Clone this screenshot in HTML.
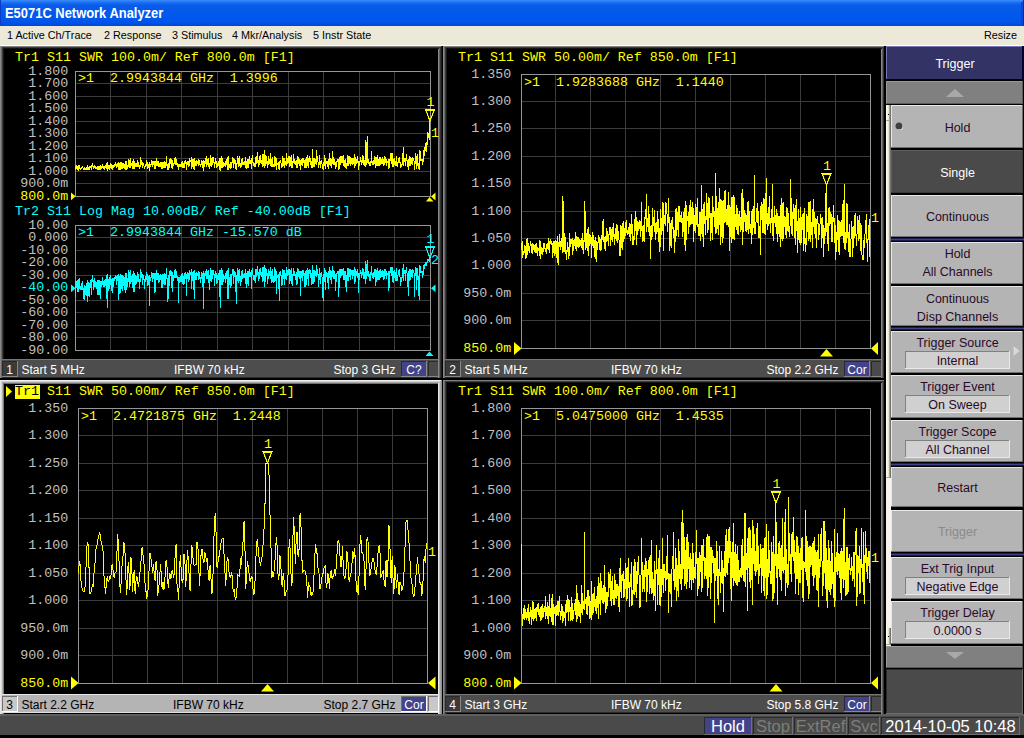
<!DOCTYPE html>
<html><head><meta charset="utf-8"><style>
html,body{margin:0;padding:0;background:#000;width:1024px;height:738px;overflow:hidden;}
svg{display:block;}
text{shape-rendering:auto;white-space:pre;}
polygon{shape-rendering:auto;}
</style></head><body>
<svg width="1024" height="738" viewBox="0 0 1024 738" shape-rendering="crispEdges"><defs>
<linearGradient id="tb" x1="0" y1="0" x2="0" y2="1">
<stop offset="0" stop-color="#3b8cf7"/>
<stop offset="0.1" stop-color="#1a6ef5"/>
<stop offset="0.2" stop-color="#0a5ce8"/>
<stop offset="0.55" stop-color="#0058ee"/>
<stop offset="0.85" stop-color="#0055ea"/>
<stop offset="1" stop-color="#0046d6"/>
</linearGradient>
</defs>
<rect x="0" y="0" width="1024" height="26" fill="url(#tb)" />
<rect x="0" y="0" width="1" height="26" fill="#0a3cc8" />
<rect x="1021" y="2" width="3" height="24" fill="#0844d8" />
<rect x="1023" y="0" width="1" height="26" fill="#0030b0" />
<text transform="translate(5,18) scale(0.924 1)" x="0" y="0" fill="#ffffff" font-family="Liberation Sans" font-size="14" font-weight="bold">E5071C Network Analyzer</text>
<rect x="0" y="26" width="1024" height="19" fill="#ece9d8" />
<rect x="0" y="45" width="1024" height="1" fill="#ffffff" />
<text x="7" y="39" fill="#000000" font-family="'Liberation Sans', sans-serif" font-size="10.8" text-anchor="start" font-weight="normal" >1 Active Ch/Trace</text>
<text x="104" y="39" fill="#000000" font-family="'Liberation Sans', sans-serif" font-size="10.8" text-anchor="start" font-weight="normal" >2 Response</text>
<text x="172" y="39" fill="#000000" font-family="'Liberation Sans', sans-serif" font-size="10.8" text-anchor="start" font-weight="normal" >3 Stimulus</text>
<text x="232" y="39" fill="#000000" font-family="'Liberation Sans', sans-serif" font-size="10.8" text-anchor="start" font-weight="normal" >4 Mkr/Analysis</text>
<text x="313" y="39" fill="#000000" font-family="'Liberation Sans', sans-serif" font-size="10.8" text-anchor="start" font-weight="normal" >5 Instr State</text>
<text x="1017" y="39" fill="#000000" font-family="'Liberation Sans', sans-serif" font-size="10.8" text-anchor="end" font-weight="normal" >Resize</text>
<rect x="0" y="46" width="886" height="669" fill="#000000" />
<rect x="0" y="46" width="442" height="332" fill="#000000" />
<rect x="0" y="46" width="442" height="1" fill="#808080" />
<rect x="0" y="47" width="442" height="1" fill="#3c3c3c" />
<rect x="0" y="48" width="442" height="1" fill="#141414" />
<rect x="0" y="46" width="1" height="332" fill="#888888" />
<rect x="1" y="47" width="1" height="331" fill="#6a6a6a" />
<rect x="2" y="48" width="1" height="330" fill="#3a3a3a" />
<rect x="3" y="49" width="1" height="329" fill="#1a1a1a" />
<rect x="441" y="46" width="1" height="332" fill="#1a1a1a" />
<rect x="440" y="47" width="1" height="331" fill="#333333" />
<rect x="439" y="48" width="1" height="330" fill="#606060" />
<rect x="438" y="49" width="1" height="329" fill="#888888" />
<rect x="443" y="46" width="442" height="332" fill="#000000" />
<rect x="443" y="46" width="442" height="1" fill="#808080" />
<rect x="443" y="47" width="442" height="1" fill="#3c3c3c" />
<rect x="443" y="48" width="442" height="1" fill="#141414" />
<rect x="443" y="46" width="1" height="332" fill="#888888" />
<rect x="444" y="47" width="1" height="331" fill="#6a6a6a" />
<rect x="445" y="48" width="1" height="330" fill="#3a3a3a" />
<rect x="446" y="49" width="1" height="329" fill="#1a1a1a" />
<rect x="884" y="46" width="1" height="332" fill="#1a1a1a" />
<rect x="883" y="47" width="1" height="331" fill="#333333" />
<rect x="882" y="48" width="1" height="330" fill="#606060" />
<rect x="881" y="49" width="1" height="329" fill="#888888" />
<rect x="0" y="380" width="442" height="334" fill="#000000" />
<rect x="0" y="380" width="1" height="334" fill="#e8e8e8" />
<rect x="1" y="381" width="1" height="333" fill="#d8d8d8" />
<rect x="2" y="382" width="1" height="332" fill="#b0b0b0" />
<rect x="3" y="383" width="1" height="331" fill="#787878" />
<rect x="0" y="380" width="442" height="1" fill="#f0f0f0" />
<rect x="1" y="381" width="440" height="1" fill="#d0d0d0" />
<rect x="2" y="382" width="438" height="1" fill="#a8a8a8" />
<rect x="3" y="383" width="436" height="1" fill="#707070" />
<rect x="441" y="380" width="1" height="334" fill="#909090" />
<rect x="440" y="381" width="1" height="333" fill="#a4a4a4" />
<rect x="439" y="382" width="1" height="332" fill="#c4c4c4" />
<rect x="438" y="383" width="1" height="331" fill="#e8e8e8" />
<rect x="443" y="380" width="442" height="334" fill="#000000" />
<rect x="443" y="380" width="442" height="1" fill="#808080" />
<rect x="443" y="381" width="442" height="1" fill="#3c3c3c" />
<rect x="443" y="382" width="442" height="1" fill="#141414" />
<rect x="443" y="380" width="1" height="334" fill="#888888" />
<rect x="444" y="381" width="1" height="333" fill="#6a6a6a" />
<rect x="445" y="382" width="1" height="332" fill="#3a3a3a" />
<rect x="446" y="383" width="1" height="331" fill="#1a1a1a" />
<rect x="884" y="380" width="1" height="334" fill="#1a1a1a" />
<rect x="883" y="381" width="1" height="333" fill="#333333" />
<rect x="882" y="382" width="1" height="332" fill="#606060" />
<rect x="881" y="383" width="1" height="331" fill="#888888" />
<rect x="110" y="71" width="1" height="125" fill="#3c3c3c" />
<rect x="146" y="71" width="1" height="125" fill="#3c3c3c" />
<rect x="181" y="71" width="1" height="125" fill="#3c3c3c" />
<rect x="217" y="71" width="1" height="125" fill="#3c3c3c" />
<rect x="252" y="71" width="1" height="125" fill="#3c3c3c" />
<rect x="288" y="71" width="1" height="125" fill="#3c3c3c" />
<rect x="323" y="71" width="1" height="125" fill="#3c3c3c" />
<rect x="359" y="71" width="1" height="125" fill="#3c3c3c" />
<rect x="394" y="71" width="1" height="125" fill="#3c3c3c" />
<rect x="75" y="83" width="355" height="1" fill="#3c3c3c" />
<rect x="75" y="96" width="355" height="1" fill="#3c3c3c" />
<rect x="75" y="108" width="355" height="1" fill="#3c3c3c" />
<rect x="75" y="121" width="355" height="1" fill="#3c3c3c" />
<rect x="75" y="133" width="355" height="1" fill="#3c3c3c" />
<rect x="75" y="146" width="355" height="1" fill="#3c3c3c" />
<rect x="75" y="158" width="355" height="1" fill="#3c3c3c" />
<rect x="75" y="171" width="355" height="1" fill="#3c3c3c" />
<rect x="75" y="183" width="355" height="1" fill="#3c3c3c" />
<rect x="75" y="71" width="356" height="1" fill="#969696" />
<rect x="75" y="196" width="356" height="1" fill="#969696" />
<rect x="75" y="71" width="1" height="126" fill="#969696" />
<rect x="430" y="71" width="1" height="126" fill="#969696" />
<text transform="translate(15,61) scale(1.111 1)" x="0" y="0" fill="#ffff00" font-family="Liberation Mono" font-size="12" text-anchor="start" >Tr1 S11 SWR 100.0m/ Ref 800.0m [F1]</text>
<text transform="translate(68.2,74.6) scale(1.111 1)" x="0" y="0" fill="#c0c0c0" font-family="Liberation Mono" font-size="12" text-anchor="end" >1.800</text>
<text transform="translate(68.2,87.1) scale(1.111 1)" x="0" y="0" fill="#c0c0c0" font-family="Liberation Mono" font-size="12" text-anchor="end" >1.700</text>
<text transform="translate(68.2,99.6) scale(1.111 1)" x="0" y="0" fill="#c0c0c0" font-family="Liberation Mono" font-size="12" text-anchor="end" >1.600</text>
<text transform="translate(68.2,112.1) scale(1.111 1)" x="0" y="0" fill="#c0c0c0" font-family="Liberation Mono" font-size="12" text-anchor="end" >1.500</text>
<text transform="translate(68.2,124.6) scale(1.111 1)" x="0" y="0" fill="#c0c0c0" font-family="Liberation Mono" font-size="12" text-anchor="end" >1.400</text>
<text transform="translate(68.2,137.1) scale(1.111 1)" x="0" y="0" fill="#c0c0c0" font-family="Liberation Mono" font-size="12" text-anchor="end" >1.300</text>
<text transform="translate(68.2,149.6) scale(1.111 1)" x="0" y="0" fill="#c0c0c0" font-family="Liberation Mono" font-size="12" text-anchor="end" >1.200</text>
<text transform="translate(68.2,162.1) scale(1.111 1)" x="0" y="0" fill="#c0c0c0" font-family="Liberation Mono" font-size="12" text-anchor="end" >1.100</text>
<text transform="translate(68.2,174.6) scale(1.111 1)" x="0" y="0" fill="#c0c0c0" font-family="Liberation Mono" font-size="12" text-anchor="end" >1.000</text>
<text transform="translate(68.2,187.1) scale(1.111 1)" x="0" y="0" fill="#c0c0c0" font-family="Liberation Mono" font-size="12" text-anchor="end" >900.0m</text>
<text transform="translate(68.2,199.6) scale(1.111 1)" x="0" y="0" fill="#ffff00" font-family="Liberation Mono" font-size="12" text-anchor="end" >800.0m</text>
<text transform="translate(78,82) scale(1.111 1)" x="0" y="0" fill="#ffff00" font-family="Liberation Mono" font-size="12" text-anchor="start" >&gt;1  2.9943844 GHz  1.3996</text>
<rect x="110" y="225" width="1" height="125" fill="#3c3c3c" />
<rect x="146" y="225" width="1" height="125" fill="#3c3c3c" />
<rect x="181" y="225" width="1" height="125" fill="#3c3c3c" />
<rect x="217" y="225" width="1" height="125" fill="#3c3c3c" />
<rect x="252" y="225" width="1" height="125" fill="#3c3c3c" />
<rect x="288" y="225" width="1" height="125" fill="#3c3c3c" />
<rect x="323" y="225" width="1" height="125" fill="#3c3c3c" />
<rect x="359" y="225" width="1" height="125" fill="#3c3c3c" />
<rect x="394" y="225" width="1" height="125" fill="#3c3c3c" />
<rect x="75" y="237" width="355" height="1" fill="#3c3c3c" />
<rect x="75" y="250" width="355" height="1" fill="#3c3c3c" />
<rect x="75" y="262" width="355" height="1" fill="#3c3c3c" />
<rect x="75" y="275" width="355" height="1" fill="#3c3c3c" />
<rect x="75" y="287" width="355" height="1" fill="#3c3c3c" />
<rect x="75" y="300" width="355" height="1" fill="#3c3c3c" />
<rect x="75" y="312" width="355" height="1" fill="#3c3c3c" />
<rect x="75" y="325" width="355" height="1" fill="#3c3c3c" />
<rect x="75" y="337" width="355" height="1" fill="#3c3c3c" />
<rect x="75" y="225" width="356" height="1" fill="#969696" />
<rect x="75" y="350" width="356" height="1" fill="#969696" />
<rect x="75" y="225" width="1" height="126" fill="#969696" />
<rect x="430" y="225" width="1" height="126" fill="#969696" />
<text transform="translate(15,215) scale(1.111 1)" x="0" y="0" fill="#00ffff" font-family="Liberation Mono" font-size="12" text-anchor="start" >Tr2 S11 Log Mag 10.00dB/ Ref -40.00dB [F1]</text>
<text transform="translate(68.2,228.6) scale(1.111 1)" x="0" y="0" fill="#c0c0c0" font-family="Liberation Mono" font-size="12" text-anchor="end" >10.00</text>
<text transform="translate(68.2,241.1) scale(1.111 1)" x="0" y="0" fill="#c0c0c0" font-family="Liberation Mono" font-size="12" text-anchor="end" >0.000</text>
<text transform="translate(68.2,253.6) scale(1.111 1)" x="0" y="0" fill="#c0c0c0" font-family="Liberation Mono" font-size="12" text-anchor="end" >-10.00</text>
<text transform="translate(68.2,266.1) scale(1.111 1)" x="0" y="0" fill="#c0c0c0" font-family="Liberation Mono" font-size="12" text-anchor="end" >-20.00</text>
<text transform="translate(68.2,278.6) scale(1.111 1)" x="0" y="0" fill="#c0c0c0" font-family="Liberation Mono" font-size="12" text-anchor="end" >-30.00</text>
<text transform="translate(68.2,291.1) scale(1.111 1)" x="0" y="0" fill="#00ffff" font-family="Liberation Mono" font-size="12" text-anchor="end" >-40.00</text>
<text transform="translate(68.2,303.6) scale(1.111 1)" x="0" y="0" fill="#c0c0c0" font-family="Liberation Mono" font-size="12" text-anchor="end" >-50.00</text>
<text transform="translate(68.2,316.1) scale(1.111 1)" x="0" y="0" fill="#c0c0c0" font-family="Liberation Mono" font-size="12" text-anchor="end" >-60.00</text>
<text transform="translate(68.2,328.6) scale(1.111 1)" x="0" y="0" fill="#c0c0c0" font-family="Liberation Mono" font-size="12" text-anchor="end" >-70.00</text>
<text transform="translate(68.2,341.1) scale(1.111 1)" x="0" y="0" fill="#c0c0c0" font-family="Liberation Mono" font-size="12" text-anchor="end" >-80.00</text>
<text transform="translate(68.2,353.6) scale(1.111 1)" x="0" y="0" fill="#c0c0c0" font-family="Liberation Mono" font-size="12" text-anchor="end" >-90.00</text>
<text transform="translate(78,236) scale(1.111 1)" x="0" y="0" fill="#00ffff" font-family="Liberation Mono" font-size="12" text-anchor="start" >&gt;1  2.9943844 GHz -15.570 dB</text>
<rect x="2" y="359" width="436" height="1" fill="#787878" />
<rect x="2" y="360" width="436" height="18" fill="#4d4d4d" />
<rect x="2" y="377" width="436" height="1" fill="#2a2a2a" />
<rect x="2" y="361" width="16" height="16" fill="#888888" />
<rect x="2" y="361" width="15" height="15" fill="#2a2a2a" />
<rect x="3" y="362" width="14" height="14" fill="#3a3a3a" />
<text x="9.5" y="374" fill="#ffffff" font-family="'Liberation Sans', sans-serif" font-size="12" text-anchor="middle" font-weight="normal" >1</text>
<text x="21.5" y="374" fill="#ffffff" font-family="'Liberation Sans', sans-serif" font-size="12" text-anchor="start" font-weight="normal" >Start 5 MHz</text>
<text x="174" y="374" fill="#ffffff" font-family="'Liberation Sans', sans-serif" font-size="12" text-anchor="start" font-weight="normal" >IFBW 70 kHz</text>
<text x="395.5" y="374" fill="#ffffff" font-family="'Liberation Sans', sans-serif" font-size="12" text-anchor="end" font-weight="normal" >Stop 3 GHz</text>
<rect x="401" y="361" width="26" height="16" fill="#888888" />
<rect x="401" y="361" width="25" height="15" fill="#2a2a2a" />
<rect x="402" y="362" width="24" height="14" fill="#43438a" />
<text x="414" y="374" fill="#ffffff" font-family="'Liberation Sans', sans-serif" font-size="12" text-anchor="middle" font-weight="normal" >C?</text>
<rect x="428" y="361" width="11" height="16" fill="#888888" />
<rect x="428" y="361" width="10" height="15" fill="#2a2a2a" />
<rect x="429" y="362" width="9" height="14" fill="#4a4a4a" />
<rect x="555" y="74" width="1" height="274" fill="#3c3c3c" />
<rect x="590" y="74" width="1" height="274" fill="#3c3c3c" />
<rect x="625" y="74" width="1" height="274" fill="#3c3c3c" />
<rect x="660" y="74" width="1" height="274" fill="#3c3c3c" />
<rect x="695" y="74" width="1" height="274" fill="#3c3c3c" />
<rect x="730" y="74" width="1" height="274" fill="#3c3c3c" />
<rect x="765" y="74" width="1" height="274" fill="#3c3c3c" />
<rect x="800" y="74" width="1" height="274" fill="#3c3c3c" />
<rect x="835" y="74" width="1" height="274" fill="#3c3c3c" />
<rect x="521" y="101" width="349" height="1" fill="#3c3c3c" />
<rect x="521" y="128" width="349" height="1" fill="#3c3c3c" />
<rect x="521" y="156" width="349" height="1" fill="#3c3c3c" />
<rect x="521" y="183" width="349" height="1" fill="#3c3c3c" />
<rect x="521" y="211" width="349" height="1" fill="#3c3c3c" />
<rect x="521" y="238" width="349" height="1" fill="#3c3c3c" />
<rect x="521" y="265" width="349" height="1" fill="#3c3c3c" />
<rect x="521" y="293" width="349" height="1" fill="#3c3c3c" />
<rect x="521" y="320" width="349" height="1" fill="#3c3c3c" />
<rect x="521" y="74" width="350" height="1" fill="#969696" />
<rect x="521" y="348" width="350" height="1" fill="#969696" />
<rect x="521" y="74" width="1" height="275" fill="#969696" />
<rect x="870" y="74" width="1" height="275" fill="#969696" />
<text transform="translate(458,61) scale(1.111 1)" x="0" y="0" fill="#ffff00" font-family="Liberation Mono" font-size="12" text-anchor="start" >Tr1 S11 SWR 50.00m/ Ref 850.0m [F1]</text>
<text transform="translate(511.2,77.6) scale(1.111 1)" x="0" y="0" fill="#c0c0c0" font-family="Liberation Mono" font-size="12" text-anchor="end" >1.350</text>
<text transform="translate(511.2,105.0) scale(1.111 1)" x="0" y="0" fill="#c0c0c0" font-family="Liberation Mono" font-size="12" text-anchor="end" >1.300</text>
<text transform="translate(511.2,132.4) scale(1.111 1)" x="0" y="0" fill="#c0c0c0" font-family="Liberation Mono" font-size="12" text-anchor="end" >1.250</text>
<text transform="translate(511.2,159.79999999999998) scale(1.111 1)" x="0" y="0" fill="#c0c0c0" font-family="Liberation Mono" font-size="12" text-anchor="end" >1.200</text>
<text transform="translate(511.2,187.2) scale(1.111 1)" x="0" y="0" fill="#c0c0c0" font-family="Liberation Mono" font-size="12" text-anchor="end" >1.150</text>
<text transform="translate(511.2,214.6) scale(1.111 1)" x="0" y="0" fill="#c0c0c0" font-family="Liberation Mono" font-size="12" text-anchor="end" >1.100</text>
<text transform="translate(511.2,242.0) scale(1.111 1)" x="0" y="0" fill="#c0c0c0" font-family="Liberation Mono" font-size="12" text-anchor="end" >1.050</text>
<text transform="translate(511.2,269.40000000000003) scale(1.111 1)" x="0" y="0" fill="#c0c0c0" font-family="Liberation Mono" font-size="12" text-anchor="end" >1.000</text>
<text transform="translate(511.2,296.8) scale(1.111 1)" x="0" y="0" fill="#c0c0c0" font-family="Liberation Mono" font-size="12" text-anchor="end" >950.0m</text>
<text transform="translate(511.2,324.20000000000005) scale(1.111 1)" x="0" y="0" fill="#c0c0c0" font-family="Liberation Mono" font-size="12" text-anchor="end" >900.0m</text>
<text transform="translate(511.2,351.6) scale(1.111 1)" x="0" y="0" fill="#ffff00" font-family="Liberation Mono" font-size="12" text-anchor="end" >850.0m</text>
<text transform="translate(524,86) scale(1.111 1)" x="0" y="0" fill="#ffff00" font-family="Liberation Mono" font-size="12" text-anchor="start" >&gt;1  1.9283688 GHz  1.1440</text>
<rect x="445" y="359" width="436" height="1" fill="#787878" />
<rect x="445" y="360" width="436" height="18" fill="#4d4d4d" />
<rect x="445" y="377" width="436" height="1" fill="#2a2a2a" />
<rect x="445" y="361" width="16" height="16" fill="#888888" />
<rect x="445" y="361" width="15" height="15" fill="#2a2a2a" />
<rect x="446" y="362" width="14" height="14" fill="#3a3a3a" />
<text x="452.5" y="374" fill="#ffffff" font-family="'Liberation Sans', sans-serif" font-size="12" text-anchor="middle" font-weight="normal" >2</text>
<text x="464.5" y="374" fill="#ffffff" font-family="'Liberation Sans', sans-serif" font-size="12" text-anchor="start" font-weight="normal" >Start 5 MHz</text>
<text x="611" y="374" fill="#ffffff" font-family="'Liberation Sans', sans-serif" font-size="12" text-anchor="start" font-weight="normal" >IFBW 70 kHz</text>
<text x="838.5" y="374" fill="#ffffff" font-family="'Liberation Sans', sans-serif" font-size="12" text-anchor="end" font-weight="normal" >Stop 2.2 GHz</text>
<rect x="844" y="361" width="26" height="16" fill="#888888" />
<rect x="844" y="361" width="25" height="15" fill="#2a2a2a" />
<rect x="845" y="362" width="24" height="14" fill="#43438a" />
<text x="857" y="374" fill="#ffffff" font-family="'Liberation Sans', sans-serif" font-size="12" text-anchor="middle" font-weight="normal" >Cor</text>
<rect x="871" y="361" width="11" height="16" fill="#888888" />
<rect x="871" y="361" width="10" height="15" fill="#2a2a2a" />
<rect x="872" y="362" width="9" height="14" fill="#4a4a4a" />
<rect x="112" y="408" width="1" height="275" fill="#3c3c3c" />
<rect x="147" y="408" width="1" height="275" fill="#3c3c3c" />
<rect x="182" y="408" width="1" height="275" fill="#3c3c3c" />
<rect x="217" y="408" width="1" height="275" fill="#3c3c3c" />
<rect x="252" y="408" width="1" height="275" fill="#3c3c3c" />
<rect x="287" y="408" width="1" height="275" fill="#3c3c3c" />
<rect x="322" y="408" width="1" height="275" fill="#3c3c3c" />
<rect x="357" y="408" width="1" height="275" fill="#3c3c3c" />
<rect x="392" y="408" width="1" height="275" fill="#3c3c3c" />
<rect x="78" y="435" width="349" height="1" fill="#3c3c3c" />
<rect x="78" y="463" width="349" height="1" fill="#3c3c3c" />
<rect x="78" y="490" width="349" height="1" fill="#3c3c3c" />
<rect x="78" y="518" width="349" height="1" fill="#3c3c3c" />
<rect x="78" y="545" width="349" height="1" fill="#3c3c3c" />
<rect x="78" y="573" width="349" height="1" fill="#3c3c3c" />
<rect x="78" y="600" width="349" height="1" fill="#3c3c3c" />
<rect x="78" y="628" width="349" height="1" fill="#3c3c3c" />
<rect x="78" y="655" width="349" height="1" fill="#3c3c3c" />
<rect x="78" y="408" width="350" height="1" fill="#969696" />
<rect x="78" y="683" width="350" height="1" fill="#969696" />
<rect x="78" y="408" width="1" height="276" fill="#969696" />
<rect x="427" y="408" width="1" height="276" fill="#969696" />
<text transform="translate(68.2,411.6) scale(1.111 1)" x="0" y="0" fill="#c0c0c0" font-family="Liberation Mono" font-size="12" text-anchor="end" >1.350</text>
<text transform="translate(68.2,439.1) scale(1.111 1)" x="0" y="0" fill="#c0c0c0" font-family="Liberation Mono" font-size="12" text-anchor="end" >1.300</text>
<text transform="translate(68.2,466.6) scale(1.111 1)" x="0" y="0" fill="#c0c0c0" font-family="Liberation Mono" font-size="12" text-anchor="end" >1.250</text>
<text transform="translate(68.2,494.1) scale(1.111 1)" x="0" y="0" fill="#c0c0c0" font-family="Liberation Mono" font-size="12" text-anchor="end" >1.200</text>
<text transform="translate(68.2,521.6) scale(1.111 1)" x="0" y="0" fill="#c0c0c0" font-family="Liberation Mono" font-size="12" text-anchor="end" >1.150</text>
<text transform="translate(68.2,549.1) scale(1.111 1)" x="0" y="0" fill="#c0c0c0" font-family="Liberation Mono" font-size="12" text-anchor="end" >1.100</text>
<text transform="translate(68.2,576.6) scale(1.111 1)" x="0" y="0" fill="#c0c0c0" font-family="Liberation Mono" font-size="12" text-anchor="end" >1.050</text>
<text transform="translate(68.2,604.1) scale(1.111 1)" x="0" y="0" fill="#c0c0c0" font-family="Liberation Mono" font-size="12" text-anchor="end" >1.000</text>
<text transform="translate(68.2,631.6) scale(1.111 1)" x="0" y="0" fill="#c0c0c0" font-family="Liberation Mono" font-size="12" text-anchor="end" >950.0m</text>
<text transform="translate(68.2,659.1) scale(1.111 1)" x="0" y="0" fill="#c0c0c0" font-family="Liberation Mono" font-size="12" text-anchor="end" >900.0m</text>
<text transform="translate(68.2,686.6) scale(1.111 1)" x="0" y="0" fill="#ffff00" font-family="Liberation Mono" font-size="12" text-anchor="end" >850.0m</text>
<rect x="15" y="385" width="25" height="14" fill="#ffff00" />
<polygon points="6,386 12,391.5 6,397" fill="#ffff00" stroke="none"/>
<text transform="translate(15,395) scale(1.111 1)" x="0" y="0" fill="#000000" font-family="Liberation Mono" font-size="12" text-anchor="start" >Tr1</text>
<text transform="translate(15,395) scale(1.111 1)" x="0" y="0" fill="#ffff00" font-family="Liberation Mono" font-size="12" text-anchor="start" xml:space="preserve">    S11 SWR 50.00m/ Ref 850.0m [F1]</text>
<text transform="translate(81,420) scale(1.111 1)" x="0" y="0" fill="#ffff00" font-family="Liberation Mono" font-size="12" text-anchor="start" >&gt;1  2.4721875 GHz  1.2448</text>
<rect x="2" y="694" width="436" height="1" fill="#e6e6e6" />
<rect x="2" y="695" width="436" height="18" fill="#b4b4b4" />
<rect x="2" y="712" width="436" height="1" fill="#e0e0e0" />
<rect x="2" y="696" width="16" height="16" fill="#ffffff" />
<rect x="2" y="696" width="15" height="15" fill="#707070" />
<rect x="3" y="697" width="14" height="14" fill="#c8c8c8" />
<text x="9.5" y="709" fill="#000000" font-family="'Liberation Sans', sans-serif" font-size="12" text-anchor="middle" font-weight="normal" >3</text>
<text x="21.5" y="709" fill="#000000" font-family="'Liberation Sans', sans-serif" font-size="12" text-anchor="start" font-weight="normal" >Start 2.2 GHz</text>
<text x="173" y="709" fill="#000000" font-family="'Liberation Sans', sans-serif" font-size="12" text-anchor="start" font-weight="normal" >IFBW 70 kHz</text>
<text x="395.5" y="709" fill="#000000" font-family="'Liberation Sans', sans-serif" font-size="12" text-anchor="end" font-weight="normal" >Stop 2.7 GHz</text>
<rect x="401" y="696" width="26" height="16" fill="#ffffff" />
<rect x="401" y="696" width="25" height="15" fill="#707070" />
<rect x="402" y="697" width="24" height="14" fill="#43438a" />
<text x="414" y="709" fill="#ffffff" font-family="'Liberation Sans', sans-serif" font-size="12" text-anchor="middle" font-weight="normal" >Cor</text>
<rect x="428" y="696" width="11" height="16" fill="#ffffff" />
<rect x="428" y="696" width="10" height="15" fill="#707070" />
<rect x="429" y="697" width="9" height="14" fill="#c8c8c8" />
<rect x="555" y="408" width="1" height="275" fill="#3c3c3c" />
<rect x="590" y="408" width="1" height="275" fill="#3c3c3c" />
<rect x="625" y="408" width="1" height="275" fill="#3c3c3c" />
<rect x="660" y="408" width="1" height="275" fill="#3c3c3c" />
<rect x="695" y="408" width="1" height="275" fill="#3c3c3c" />
<rect x="730" y="408" width="1" height="275" fill="#3c3c3c" />
<rect x="765" y="408" width="1" height="275" fill="#3c3c3c" />
<rect x="800" y="408" width="1" height="275" fill="#3c3c3c" />
<rect x="835" y="408" width="1" height="275" fill="#3c3c3c" />
<rect x="521" y="435" width="349" height="1" fill="#3c3c3c" />
<rect x="521" y="463" width="349" height="1" fill="#3c3c3c" />
<rect x="521" y="490" width="349" height="1" fill="#3c3c3c" />
<rect x="521" y="518" width="349" height="1" fill="#3c3c3c" />
<rect x="521" y="545" width="349" height="1" fill="#3c3c3c" />
<rect x="521" y="573" width="349" height="1" fill="#3c3c3c" />
<rect x="521" y="600" width="349" height="1" fill="#3c3c3c" />
<rect x="521" y="628" width="349" height="1" fill="#3c3c3c" />
<rect x="521" y="655" width="349" height="1" fill="#3c3c3c" />
<rect x="521" y="408" width="350" height="1" fill="#969696" />
<rect x="521" y="683" width="350" height="1" fill="#969696" />
<rect x="521" y="408" width="1" height="276" fill="#969696" />
<rect x="870" y="408" width="1" height="276" fill="#969696" />
<text transform="translate(458,395) scale(1.111 1)" x="0" y="0" fill="#ffff00" font-family="Liberation Mono" font-size="12" text-anchor="start" >Tr1 S11 SWR 100.0m/ Ref 800.0m [F1]</text>
<text transform="translate(511.2,411.6) scale(1.111 1)" x="0" y="0" fill="#c0c0c0" font-family="Liberation Mono" font-size="12" text-anchor="end" >1.800</text>
<text transform="translate(511.2,439.1) scale(1.111 1)" x="0" y="0" fill="#c0c0c0" font-family="Liberation Mono" font-size="12" text-anchor="end" >1.700</text>
<text transform="translate(511.2,466.6) scale(1.111 1)" x="0" y="0" fill="#c0c0c0" font-family="Liberation Mono" font-size="12" text-anchor="end" >1.600</text>
<text transform="translate(511.2,494.1) scale(1.111 1)" x="0" y="0" fill="#c0c0c0" font-family="Liberation Mono" font-size="12" text-anchor="end" >1.500</text>
<text transform="translate(511.2,521.6) scale(1.111 1)" x="0" y="0" fill="#c0c0c0" font-family="Liberation Mono" font-size="12" text-anchor="end" >1.400</text>
<text transform="translate(511.2,549.1) scale(1.111 1)" x="0" y="0" fill="#c0c0c0" font-family="Liberation Mono" font-size="12" text-anchor="end" >1.300</text>
<text transform="translate(511.2,576.6) scale(1.111 1)" x="0" y="0" fill="#c0c0c0" font-family="Liberation Mono" font-size="12" text-anchor="end" >1.200</text>
<text transform="translate(511.2,604.1) scale(1.111 1)" x="0" y="0" fill="#c0c0c0" font-family="Liberation Mono" font-size="12" text-anchor="end" >1.100</text>
<text transform="translate(511.2,631.6) scale(1.111 1)" x="0" y="0" fill="#c0c0c0" font-family="Liberation Mono" font-size="12" text-anchor="end" >1.000</text>
<text transform="translate(511.2,659.1) scale(1.111 1)" x="0" y="0" fill="#c0c0c0" font-family="Liberation Mono" font-size="12" text-anchor="end" >900.0m</text>
<text transform="translate(511.2,686.6) scale(1.111 1)" x="0" y="0" fill="#ffff00" font-family="Liberation Mono" font-size="12" text-anchor="end" >800.0m</text>
<text transform="translate(524,420) scale(1.111 1)" x="0" y="0" fill="#ffff00" font-family="Liberation Mono" font-size="12" text-anchor="start" >&gt;1  5.0475000 GHz  1.4535</text>
<rect x="445" y="694" width="436" height="1" fill="#787878" />
<rect x="445" y="695" width="436" height="18" fill="#4d4d4d" />
<rect x="445" y="712" width="436" height="1" fill="#2a2a2a" />
<rect x="445" y="696" width="16" height="16" fill="#888888" />
<rect x="445" y="696" width="15" height="15" fill="#2a2a2a" />
<rect x="446" y="697" width="14" height="14" fill="#3a3a3a" />
<text x="452.5" y="709" fill="#ffffff" font-family="'Liberation Sans', sans-serif" font-size="12" text-anchor="middle" font-weight="normal" >4</text>
<text x="464.5" y="709" fill="#ffffff" font-family="'Liberation Sans', sans-serif" font-size="12" text-anchor="start" font-weight="normal" >Start 3 GHz</text>
<text x="611" y="709" fill="#ffffff" font-family="'Liberation Sans', sans-serif" font-size="12" text-anchor="start" font-weight="normal" >IFBW 70 kHz</text>
<text x="838.5" y="709" fill="#ffffff" font-family="'Liberation Sans', sans-serif" font-size="12" text-anchor="end" font-weight="normal" >Stop 5.8 GHz</text>
<rect x="844" y="696" width="26" height="16" fill="#888888" />
<rect x="844" y="696" width="25" height="15" fill="#2a2a2a" />
<rect x="845" y="697" width="24" height="14" fill="#43438a" />
<text x="857" y="709" fill="#ffffff" font-family="'Liberation Sans', sans-serif" font-size="12" text-anchor="middle" font-weight="normal" >Cor</text>
<rect x="871" y="696" width="11" height="16" fill="#888888" />
<rect x="871" y="696" width="10" height="15" fill="#2a2a2a" />
<rect x="872" y="697" width="9" height="14" fill="#4a4a4a" />
<path d="M75.50,166.38 L75.80,169.99 L76.09,168.00 L76.39,167.23 L76.68,166.35 L76.98,167.85 L77.27,169.04 L77.57,169.38 L77.86,166.60 L78.16,165.24 L78.45,167.64 L78.75,169.34 L79.05,168.62 L79.34,165.11 L79.64,167.16 L79.93,168.01 L80.23,168.24 L80.52,169.02 L80.82,168.88 L81.11,168.91 L81.41,168.71 L81.70,167.15 L82.00,168.20 L82.29,167.75 L82.59,166.73 L82.89,166.65 L83.18,170.15 L83.48,168.50 L83.77,169.39 L84.07,168.34 L84.36,170.21 L84.66,167.88 L84.95,168.11 L85.25,168.42 L85.54,169.76 L85.84,168.23 L86.14,169.86 L86.43,169.33 L86.73,167.25 L87.02,169.81 L87.32,165.85 L87.61,166.23 L87.91,170.33 L88.20,166.76 L88.50,169.80 L88.79,167.91 L89.09,167.77 L89.38,169.94 L89.68,167.79 L89.98,168.42 L90.27,166.14 L90.57,168.21 L90.86,166.58 L91.16,169.78 L91.45,168.50 L91.75,169.11 L92.04,164.99 L92.34,166.76 L92.63,163.22 L92.93,166.30 L93.22,166.26 L93.52,166.21 L93.82,168.95 L94.11,167.95 L94.41,164.69 L94.70,168.05 L95.00,167.25 L95.29,166.79 L95.59,166.45 L95.88,168.46 L96.18,167.59 L96.47,167.23 L96.77,167.52 L97.07,168.94 L97.36,165.92 L97.66,169.54 L97.95,169.71 L98.25,169.59 L98.54,165.68 L98.84,168.27 L99.13,169.59 L99.43,169.69 L99.72,165.95 L100.02,167.82 L100.31,170.11 L100.61,166.32 L100.91,166.88 L101.20,166.65 L101.50,167.27 L101.79,168.40 L102.09,167.63 L102.38,164.32 L102.68,167.60 L102.97,166.02 L103.27,168.08 L103.56,167.94 L103.86,167.44 L104.16,166.16 L104.45,167.16 L104.75,168.45 L105.04,167.93 L105.34,167.37 L105.63,165.58 L105.93,167.27 L106.22,167.18 L106.52,163.02 L106.81,166.25 L107.11,170.63 L107.41,162.43 L107.70,166.57 L108.00,169.40 L108.29,165.25 L108.59,166.52 L108.88,167.71 L109.18,168.57 L109.47,168.83 L109.77,166.08 L110.06,164.19 L110.36,167.77 L110.65,165.26 L110.95,162.75 L111.25,169.20 L111.54,166.60 L111.84,167.64 L112.13,169.45 L112.43,166.76 L112.72,166.75 L113.02,164.63 L113.31,168.41 L113.61,166.48 L113.90,165.37 L114.20,166.27 L114.50,163.95 L114.79,165.96 L115.09,165.47 L115.38,162.49 L115.68,165.28 L115.97,163.79 L116.27,164.76 L116.56,167.79 L116.86,165.80 L117.15,165.02 L117.45,165.02 L117.74,162.58 L118.04,166.88 L118.34,170.23 L118.63,161.79 L118.93,163.54 L119.22,169.64 L119.52,163.36 L119.81,166.18 L120.11,169.43 L120.40,168.00 L120.70,166.54 L120.99,161.96 L121.29,168.88 L121.59,167.42 L121.88,167.41 L122.18,167.79 L122.47,169.23 L122.77,162.88 L123.06,163.69 L123.36,165.05 L123.65,166.24 L123.95,168.01 L124.24,164.40 L124.54,168.63 L124.83,167.72 L125.13,169.54 L125.43,161.27 L125.72,164.12 L126.02,169.03 L126.31,162.94 L126.61,161.38 L126.90,168.44 L127.20,168.11 L127.49,166.06 L127.79,164.81 L128.08,166.55 L128.38,166.46 L128.68,166.80 L128.97,159.96 L129.27,160.36 L129.56,164.95 L129.86,168.24 L130.15,158.38 L130.45,166.89 L130.74,167.52 L131.04,166.09 L131.33,165.10 L131.63,163.38 L131.92,165.25 L132.22,168.67 L132.52,164.99 L132.81,165.72 L133.11,159.45 L133.40,164.47 L133.70,168.49 L133.99,169.30 L134.29,161.09 L134.58,167.81 L134.88,169.26 L135.17,164.45 L135.47,166.33 L135.76,162.63 L136.06,167.38 L136.36,164.31 L136.65,163.88 L136.95,166.80 L137.24,166.11 L137.54,160.80 L137.83,160.94 L138.13,163.14 L138.42,164.31 L138.72,161.83 L139.01,166.56 L139.31,166.49 L139.61,168.90 L139.90,166.10 L140.20,166.30 L140.49,157.06 L140.79,166.76 L141.08,161.54 L141.38,161.25 L141.67,164.62 L141.97,162.39 L142.26,167.66 L142.56,165.49 L142.86,162.34 L143.15,164.45 L143.45,165.95 L143.74,162.56 L144.04,165.90 L144.33,168.85 L144.63,167.09 L144.92,167.52 L145.22,163.68 L145.51,164.55 L145.81,166.90 L146.10,164.05 L146.40,166.04 L146.70,161.52 L146.99,161.87 L147.29,163.49 L147.58,166.48 L147.88,168.11 L148.17,167.65 L148.47,163.75 L148.76,165.44 L149.06,165.73 L149.35,170.55 L149.65,163.30 L149.94,163.59 L150.24,165.94 L150.54,166.29 L150.83,164.88 L151.13,164.72 L151.42,160.40 L151.72,162.42 L152.01,161.10 L152.31,162.83 L152.60,166.87 L152.90,165.19 L153.19,163.90 L153.49,165.23 L153.79,163.22 L154.08,160.95 L154.38,165.60 L154.67,169.43 L154.97,161.64 L155.26,161.79 L155.56,162.47 L155.85,169.33 L156.15,158.25 L156.44,161.40 L156.74,163.60 L157.03,165.83 L157.33,162.55 L157.63,166.04 L157.92,161.39 L158.22,167.04 L158.51,161.13 L158.81,165.37 L159.10,165.17 L159.40,165.33 L159.69,166.84 L159.99,163.29 L160.28,163.00 L160.58,165.71 L160.88,165.02 L161.17,166.27 L161.47,162.51 L161.76,167.69 L162.06,168.58 L162.35,162.46 L162.65,163.84 L162.94,162.68 L163.24,167.61 L163.53,166.05 L163.83,161.83 L164.12,167.54 L164.42,161.27 L164.72,165.16 L165.01,167.88 L165.31,165.94 L165.60,163.90 L165.90,162.25 L166.19,165.63 L166.49,161.24 L166.78,155.69 L167.08,166.24 L167.37,169.11 L167.67,168.88 L167.97,170.34 L168.26,165.36 L168.56,163.06 L168.85,168.74 L169.15,160.91 L169.44,165.79 L169.74,168.02 L170.03,158.10 L170.33,161.73 L170.62,162.68 L170.92,163.66 L171.22,158.99 L171.51,163.52 L171.81,164.37 L172.10,169.31 L172.40,159.80 L172.69,168.00 L172.99,166.40 L173.28,162.64 L173.58,164.46 L173.87,166.42 L174.17,161.92 L174.46,162.31 L174.76,163.88 L175.06,156.96 L175.35,165.09 L175.65,160.35 L175.94,160.75 L176.24,159.73 L176.53,160.47 L176.83,164.45 L177.12,164.82 L177.42,163.30 L177.71,166.04 L178.01,166.36 L178.31,167.06 L178.60,170.39 L178.90,164.16 L179.19,165.43 L179.49,167.22 L179.78,166.05 L180.08,163.76 L180.37,166.67 L180.67,164.90 L180.96,165.41 L181.26,166.78 L181.55,163.38 L181.85,162.64 L182.15,161.49 L182.44,167.61 L182.74,166.82 L183.03,163.58 L183.33,164.86 L183.62,164.78 L183.92,167.89 L184.21,166.55 L184.51,163.72 L184.80,163.95 L185.10,159.74 L185.39,162.17 L185.69,163.79 L185.99,164.10 L186.28,169.85 L186.58,161.76 L186.87,167.20 L187.17,163.20 L187.46,160.70 L187.76,161.44 L188.05,161.52 L188.35,166.89 L188.64,165.05 L188.94,164.33 L189.24,164.74 L189.53,157.58 L189.83,165.83 L190.12,160.42 L190.42,161.94 L190.71,161.83 L191.01,161.45 L191.30,168.75 L191.60,163.06 L191.89,156.72 L192.19,163.38 L192.49,164.54 L192.78,166.52 L193.08,163.59 L193.37,168.97 L193.67,158.73 L193.96,166.08 L194.26,170.13 L194.55,157.67 L194.85,160.83 L195.14,161.83 L195.44,162.91 L195.73,164.96 L196.03,165.73 L196.33,160.90 L196.62,161.29 L196.92,160.69 L197.21,161.99 L197.51,162.83 L197.80,163.34 L198.10,160.47 L198.39,158.97 L198.69,165.80 L198.98,165.97 L199.28,159.85 L199.57,161.56 L199.87,159.95 L200.17,167.30 L200.46,165.22 L200.76,166.75 L201.05,163.74 L201.35,165.19 L201.64,159.84 L201.94,163.20 L202.23,163.13 L202.53,168.42 L202.82,164.73 L203.12,159.56 L203.42,170.66 L203.71,163.07 L204.01,161.29 L204.30,167.24 L204.60,161.42 L204.89,165.77 L205.19,159.39 L205.48,161.69 L205.78,163.73 L206.07,156.70 L206.37,157.56 L206.66,156.15 L206.96,165.18 L207.26,164.80 L207.55,161.40 L207.85,160.77 L208.14,158.20 L208.44,161.27 L208.73,167.29 L209.03,163.42 L209.32,168.93 L209.62,163.17 L209.91,165.27 L210.21,166.31 L210.51,162.80 L210.80,155.37 L211.10,166.92 L211.39,165.93 L211.69,157.63 L211.98,166.20 L212.28,157.29 L212.57,162.86 L212.87,161.40 L213.16,163.06 L213.46,157.46 L213.75,160.56 L214.05,162.51 L214.35,163.54 L214.64,168.22 L214.94,165.73 L215.23,158.55 L215.53,161.02 L215.82,160.63 L216.12,161.57 L216.41,166.58 L216.71,162.69 L217.00,167.56 L217.30,162.67 L217.60,167.24 L217.89,164.07 L218.19,162.23 L218.48,165.71 L218.78,161.31 L219.07,161.27 L219.37,161.73 L219.66,158.07 L219.96,169.66 L220.25,170.61 L220.55,161.93 L220.84,160.61 L221.14,155.67 L221.44,161.01 L221.73,160.13 L222.03,167.79 L222.32,158.49 L222.62,161.56 L222.91,166.59 L223.21,166.44 L223.50,164.74 L223.80,161.77 L224.09,165.48 L224.39,164.00 L224.69,163.33 L224.98,164.70 L225.28,163.21 L225.57,161.40 L225.87,167.09 L226.16,162.30 L226.46,159.54 L226.75,165.02 L227.05,161.86 L227.34,157.38 L227.64,169.70 L227.94,170.17 L228.23,170.05 L228.53,155.68 L228.82,165.06 L229.12,164.06 L229.41,165.61 L229.71,166.57 L230.00,167.77 L230.30,162.13 L230.59,163.05 L230.89,168.54 L231.18,167.64 L231.48,165.26 L231.78,161.86 L232.07,162.92 L232.37,159.11 L232.66,158.26 L232.96,158.98 L233.25,158.34 L233.55,167.54 L233.84,165.22 L234.14,159.36 L234.43,161.78 L234.73,164.03 L235.03,162.71 L235.32,169.29 L235.62,160.35 L235.91,161.67 L236.21,165.29 L236.50,165.68 L236.80,170.43 L237.09,161.95 L237.39,156.49 L237.68,157.09 L237.98,162.02 L238.27,164.71 L238.57,167.08 L238.87,158.72 L239.16,156.46 L239.46,166.48 L239.75,162.23 L240.05,163.63 L240.34,164.74 L240.64,167.96 L240.93,165.45 L241.23,158.72 L241.52,163.85 L241.82,166.83 L242.12,164.44 L242.41,158.21 L242.71,161.21 L243.00,163.72 L243.30,164.16 L243.59,162.48 L243.89,164.26 L244.18,161.08 L244.48,164.90 L244.77,163.85 L245.07,163.21 L245.36,157.06 L245.66,167.59 L245.96,159.28 L246.25,166.44 L246.55,168.09 L246.84,168.48 L247.14,159.96 L247.43,167.65 L247.73,165.43 L248.02,159.13 L248.32,168.21 L248.61,163.76 L248.91,164.09 L249.20,159.89 L249.50,156.34 L249.80,164.12 L250.09,159.84 L250.39,163.26 L250.68,162.88 L250.98,163.94 L251.27,158.37 L251.57,168.78 L251.86,162.38 L252.16,158.52 L252.45,162.80 L252.75,154.96 L253.05,163.65 L253.34,162.66 L253.64,165.84 L253.93,164.88 L254.23,166.34 L254.52,165.94 L254.82,162.58 L255.11,167.16 L255.41,158.74 L255.70,157.12 L256.00,164.88 L256.29,159.54 L256.59,160.71 L256.89,159.44 L257.18,152.12 L257.48,157.55 L257.77,162.13 L258.07,162.96 L258.36,164.52 L258.66,160.44 L258.95,166.48 L259.25,161.60 L259.54,163.30 L259.84,157.88 L260.14,154.90 L260.43,159.56 L260.73,158.27 L261.02,163.29 L261.32,160.90 L261.61,159.91 L261.91,164.03 L262.20,154.02 L262.50,166.57 L262.79,165.53 L263.09,156.24 L263.38,154.24 L263.68,162.34 L263.98,166.37 L264.27,149.91 L264.57,161.81 L264.86,168.43 L265.16,164.19 L265.45,154.69 L265.75,160.81 L266.04,159.37 L266.34,155.90 L266.63,157.91 L266.93,162.69 L267.23,166.31 L267.52,161.08 L267.82,167.63 L268.11,163.94 L268.41,156.12 L268.70,161.36 L269.00,162.71 L269.29,162.99 L269.59,160.30 L269.88,158.83 L270.18,165.64 L270.48,163.01 L270.77,153.43 L271.07,160.30 L271.36,166.98 L271.66,159.06 L271.95,164.97 L272.25,166.96 L272.54,156.81 L272.84,164.01 L273.13,167.30 L273.43,166.07 L273.72,164.23 L274.02,164.24 L274.32,164.72 L274.61,166.68 L274.91,156.43 L275.20,157.09 L275.50,165.84 L275.79,165.60 L276.09,158.51 L276.38,169.61 L276.68,166.10 L276.97,165.37 L277.27,163.07 L277.56,164.03 L277.86,164.08 L278.16,162.29 L278.45,168.73 L278.75,166.59 L279.04,166.44 L279.34,160.58 L279.63,170.29 L279.93,161.89 L280.22,159.99 L280.52,160.33 L280.81,160.74 L281.11,164.19 L281.41,162.82 L281.70,165.60 L282.00,168.04 L282.29,157.78 L282.59,167.31 L282.88,155.96 L283.18,160.76 L283.47,165.51 L283.77,161.88 L284.06,158.46 L284.36,167.85 L284.65,166.56 L284.95,164.14 L285.25,162.20 L285.54,161.86 L285.84,163.67 L286.13,166.10 L286.43,164.45 L286.72,153.31 L287.02,158.16 L287.31,161.66 L287.61,163.75 L287.90,160.91 L288.20,162.44 L288.50,161.91 L288.79,156.25 L289.09,158.04 L289.38,167.45 L289.68,165.21 L289.97,156.43 L290.27,162.44 L290.56,158.85 L290.86,164.08 L291.15,167.49 L291.45,160.49 L291.75,154.96 L292.04,162.02 L292.34,168.21 L292.63,164.69 L292.93,164.67 L293.22,160.09 L293.52,159.06 L293.81,154.42 L294.11,161.07 L294.40,163.77 L294.70,162.46 L294.99,162.02 L295.29,165.18 L295.59,162.47 L295.88,163.02 L296.18,167.79 L296.47,160.85 L296.77,161.26 L297.06,167.49 L297.36,161.03 L297.65,163.73 L297.95,155.60 L298.24,160.28 L298.54,162.76 L298.84,163.63 L299.13,163.00 L299.43,159.53 L299.72,165.49 L300.02,160.15 L300.31,169.90 L300.61,160.02 L300.90,159.87 L301.20,160.98 L301.49,163.48 L301.79,158.90 L302.08,166.41 L302.38,159.43 L302.68,161.55 L302.97,158.27 L303.27,158.19 L303.56,163.24 L303.86,162.15 L304.15,161.58 L304.45,168.35 L304.74,163.14 L305.04,167.53 L305.33,168.22 L305.63,159.09 L305.92,168.46 L306.22,166.43 L306.52,161.61 L306.81,157.27 L307.11,163.44 L307.40,154.70 L307.70,165.39 L307.99,165.05 L308.29,157.91 L308.58,168.01 L308.88,165.84 L309.17,156.12 L309.47,161.77 L309.77,160.65 L310.06,158.43 L310.36,159.49 L310.65,165.12 L310.95,160.85 L311.24,167.90 L311.54,161.82 L311.83,162.05 L312.13,161.68 L312.42,160.43 L312.72,149.11 L313.01,167.61 L313.31,159.61 L313.61,158.79 L313.90,158.61 L314.20,166.63 L314.49,157.62 L314.79,160.40 L315.08,163.48 L315.38,163.21 L315.67,161.49 L315.97,159.05 L316.26,158.94 L316.56,149.58 L316.86,164.54 L317.15,160.49 L317.45,160.79 L317.74,156.51 L318.04,162.42 L318.33,165.41 L318.63,168.29 L318.92,166.20 L319.22,162.11 L319.51,155.15 L319.81,159.69 L320.11,167.50 L320.40,164.59 L320.70,162.14 L320.99,162.58 L321.29,162.62 L321.58,159.82 L321.88,162.14 L322.17,166.19 L322.47,167.80 L322.76,164.36 L323.06,170.28 L323.35,163.73 L323.65,162.24 L323.95,167.52 L324.24,162.71 L324.54,165.16 L324.83,155.28 L325.13,160.05 L325.42,168.96 L325.72,161.29 L326.01,160.55 L326.31,163.88 L326.60,162.88 L326.90,161.35 L327.19,161.17 L327.49,161.42 L327.79,166.99 L328.08,161.77 L328.38,168.85 L328.67,167.93 L328.97,158.72 L329.26,162.24 L329.56,164.94 L329.85,152.62 L330.15,161.64 L330.44,165.57 L330.74,163.28 L331.04,166.21 L331.33,167.53 L331.63,161.96 L331.92,158.83 L332.22,164.15 L332.51,161.12 L332.81,150.57 L333.10,162.25 L333.40,157.49 L333.69,162.72 L333.99,165.39 L334.28,164.17 L334.58,164.16 L334.88,158.54 L335.17,165.33 L335.47,169.15 L335.76,166.40 L336.06,166.70 L336.35,163.83 L336.65,161.03 L336.94,161.86 L337.24,159.02 L337.53,160.16 L337.83,160.53 L338.13,162.73 L338.42,159.71 L338.72,169.95 L339.01,158.60 L339.31,164.22 L339.60,168.51 L339.90,156.63 L340.19,164.62 L340.49,155.97 L340.78,161.25 L341.08,162.99 L341.38,160.67 L341.67,163.21 L341.97,156.71 L342.26,156.61 L342.56,160.60 L342.85,162.74 L343.15,162.78 L343.44,155.03 L343.74,165.61 L344.03,166.09 L344.33,160.19 L344.62,160.60 L344.92,163.85 L345.22,163.04 L345.51,168.31 L345.81,158.73 L346.10,164.30 L346.40,169.31 L346.69,165.71 L346.99,167.03 L347.28,155.35 L347.58,160.11 L347.87,162.52 L348.17,155.71 L348.46,157.28 L348.76,166.33 L349.06,163.00 L349.35,155.82 L349.65,161.35 L349.94,163.29 L350.24,165.95 L350.53,157.49 L350.83,157.26 L351.12,158.12 L351.42,161.96 L351.71,162.68 L352.01,160.59 L352.31,163.03 L352.60,157.82 L352.90,165.14 L353.19,161.14 L353.49,161.48 L353.78,159.89 L354.08,157.11 L354.37,153.82 L354.67,165.26 L354.96,167.54 L355.26,161.76 L355.56,166.44 L355.85,157.05 L356.15,163.59 L356.44,161.43 L356.74,159.30 L357.03,159.21 L357.33,162.84 L357.62,157.56 L357.92,158.01 L358.21,169.54 L358.51,161.40 L358.80,161.59 L359.10,164.73 L359.40,165.14 L359.69,163.44 L359.99,161.55 L360.28,162.20 L360.58,157.33 L360.87,158.98 L361.17,164.69 L361.46,163.91 L361.76,160.00 L362.05,162.67 L362.35,162.18 L362.64,160.79 L362.94,155.46 L363.24,159.31 L363.53,157.13 L363.83,165.30 L364.12,160.34 L364.42,165.65 L364.71,161.60 L365.01,163.05 L365.30,167.42 L365.60,163.27 L365.89,140.00 L366.19,162.05 L366.49,163.00 L366.78,165.36 L367.08,136.00 L367.37,161.68 L367.67,163.32 L367.96,158.23 L368.26,162.23 L368.55,164.08 L368.85,160.16 L369.14,165.55 L369.44,162.68 L369.74,166.37 L370.03,161.27 L370.33,161.14 L370.62,166.33 L370.92,163.76 L371.21,159.64 L371.51,163.12 L371.80,151.29 L372.10,164.76 L372.39,160.95 L372.69,163.59 L372.98,163.54 L373.28,165.35 L373.58,161.35 L373.87,163.09 L374.17,156.22 L374.46,163.38 L374.76,164.08 L375.05,158.64 L375.35,161.86 L375.64,156.69 L375.94,168.09 L376.23,159.79 L376.53,159.53 L376.82,161.29 L377.12,155.28 L377.42,158.79 L377.71,162.81 L378.01,165.98 L378.30,159.34 L378.60,160.10 L378.89,159.44 L379.19,157.31 L379.48,162.42 L379.78,165.67 L380.07,164.59 L380.37,157.05 L380.67,164.24 L380.96,157.90 L381.26,162.01 L381.55,162.23 L381.85,164.13 L382.14,163.11 L382.44,157.50 L382.73,164.34 L383.03,163.55 L383.32,164.68 L383.62,159.26 L383.92,165.66 L384.21,164.48 L384.51,156.92 L384.80,157.09 L385.10,163.28 L385.39,156.54 L385.69,160.74 L385.98,159.14 L386.28,161.20 L386.57,165.58 L386.87,162.63 L387.16,161.80 L387.46,162.01 L387.76,161.91 L388.05,162.87 L388.35,159.88 L388.64,159.63 L388.94,169.23 L389.23,165.03 L389.53,163.64 L389.82,159.04 L390.12,161.24 L390.41,158.03 L390.71,160.03 L391.00,152.71 L391.30,163.62 L391.60,162.47 L391.89,162.88 L392.19,162.60 L392.48,152.70 L392.78,164.80 L393.07,167.16 L393.37,160.08 L393.66,160.50 L393.96,165.57 L394.25,158.13 L394.55,160.31 L394.85,164.28 L395.14,164.64 L395.44,166.19 L395.73,160.61 L396.03,166.35 L396.32,156.42 L396.62,156.52 L396.91,164.42 L397.21,163.74 L397.50,166.02 L397.80,165.77 L398.09,161.51 L398.39,159.68 L398.69,161.14 L398.98,158.43 L399.28,163.26 L399.57,160.54 L399.87,156.57 L400.16,168.07 L400.46,164.87 L400.75,164.94 L401.05,166.72 L401.34,166.50 L401.64,164.15 L401.94,165.21 L402.23,163.57 L402.53,161.17 L402.82,163.49 L403.12,147.00 L403.41,166.26 L403.71,165.58 L404.00,161.01 L404.30,158.42 L404.59,162.12 L404.89,159.00 L405.19,159.40 L405.48,158.27 L405.78,166.18 L406.07,156.70 L406.37,159.88 L406.66,153.92 L406.96,161.11 L407.25,162.32 L407.55,161.59 L407.84,163.05 L408.14,169.83 L408.43,164.17 L408.73,159.79 L409.03,159.49 L409.32,166.22 L409.62,160.20 L409.91,155.82 L410.21,165.92 L410.50,157.04 L410.80,165.39 L411.09,162.96 L411.39,158.63 L411.68,159.13 L411.98,164.20 L412.27,164.41 L412.57,156.84 L412.87,162.96 L413.16,158.16 L413.46,159.82 L413.75,160.25 L414.05,161.35 L414.34,163.85 L414.64,169.97 L414.93,162.92 L415.23,161.08 L415.52,163.48 L415.82,153.05 L416.12,156.93 L416.41,163.20 L416.71,169.08 L417.00,160.14 L417.30,154.27 L417.59,165.79 L417.89,160.72 L418.18,165.86 L418.48,163.41 L418.77,164.14 L419.07,170.19 L419.37,164.50 L419.66,169.15 L419.96,149.92 L420.25,156.73 L420.55,160.49 L420.84,160.44 L421.14,159.97 L421.43,160.09 L421.73,159.50 L422.02,161.17 L422.32,159.02 L422.61,164.97 L422.91,163.48 L423.21,160.49 L423.50,156.47 L423.80,156.78 L424.09,147.23 L424.39,156.01 L424.68,155.97 L424.98,151.67 L425.27,148.03 L425.57,143.06 L425.86,146.50 L426.16,151.81 L426.45,149.41 L426.75,141.81 L427.05,145.08 L427.34,140.63 L427.64,144.14 L427.93,133.53 L428.23,133.91 L428.52,134.01 L428.82,134.60 L429.11,140.27 L429.41,135.65 L429.70,121.62 L430.00,121.06" fill="none" stroke="#ffff00" stroke-width="1" shape-rendering="crispEdges"/>
<polygon points="426,110.5 434,110.5 430,121" fill="none" stroke="#ffff00" stroke-width="1"/>
<path d="M425.5,109.5 L434.5,109.5 L430,121 Z" fill="none" stroke="#ffff00" stroke-width="1"/>
<text transform="translate(430.5,106.2) scale(1.111 1)" x="0" y="0" fill="#ffff00" font-family="Liberation Mono" font-size="12" text-anchor="middle" >1</text>
<text transform="translate(431,137) scale(1.111 1)" x="0" y="0" fill="#ffff00" font-family="Liberation Mono" font-size="12" text-anchor="start" >1</text>
<polygon points="71,192.5 75.5,196.3 71,200.2" fill="#ffff00" stroke="none"/>
<polygon points="426,201.5 429.5,197 433.5,201.5" fill="#ffff00" stroke="none"/>
<polygon points="435.5,192.5 431,196.5 435.5,200.5" fill="#ffff00" stroke="none"/>
<path d="M75.50,281.03 L75.80,297.35 L76.09,285.66 L76.39,283.20 L76.68,280.95 L76.98,285.11 L77.27,290.25 L77.57,292.29 L77.86,281.56 L78.16,278.69 L78.45,284.42 L78.75,291.99 L79.05,288.14 L79.34,278.46 L79.64,282.99 L79.93,285.70 L80.23,286.54 L80.52,290.14 L80.82,289.39 L81.11,289.55 L81.41,288.53 L81.70,282.97 L82.00,286.41 L82.29,284.80 L82.59,281.88 L82.89,281.67 L83.18,299.27 L83.48,287.63 L83.77,292.33 L84.07,286.95 L84.36,300.04 L84.66,285.24 L84.95,286.05 L85.25,287.28 L85.54,295.17 L85.84,286.50 L86.14,296.12 L86.43,291.92 L86.73,283.26 L87.02,295.57 L87.32,279.87 L87.61,280.69 L87.91,301.87 L88.20,281.94 L88.50,295.49 L88.79,285.32 L89.09,284.85 L89.38,296.90 L89.68,284.92 L89.98,287.28 L90.27,280.49 L90.57,286.42 L90.86,281.49 L91.16,295.35 L91.45,287.61 L91.75,290.62 L92.04,278.23 L92.34,281.95 L92.63,275.50 L92.93,280.86 L93.22,280.75 L93.52,280.64 L93.82,289.75 L94.11,285.47 L94.41,277.71 L94.70,285.81 L95.00,283.26 L95.29,282.03 L95.59,281.19 L95.88,287.42 L96.18,284.29 L96.47,283.21 L96.77,284.07 L97.07,289.71 L97.36,280.01 L97.66,293.40 L97.95,294.76 L98.25,293.81 L98.54,279.53 L98.84,286.65 L99.13,293.80 L99.43,294.61 L99.72,280.08 L100.02,285.01 L100.31,298.70 L100.61,280.90 L100.91,282.26 L101.20,281.67 L101.50,283.32 L101.79,287.18 L102.09,284.41 L102.38,277.12 L102.68,284.29 L102.97,280.23 L103.27,285.96 L103.56,285.43 L103.86,283.81 L104.16,280.54 L104.45,283.02 L104.75,287.41 L105.04,285.39 L105.34,283.62 L105.63,279.33 L105.93,283.32 L106.22,283.07 L106.52,275.24 L106.81,280.74 L107.11,308.30 L107.41,274.49 L107.70,281.48 L108.00,292.39 L108.29,278.71 L108.59,281.37 L108.88,284.65 L109.18,287.93 L109.47,289.13 L109.77,280.36 L110.06,276.91 L110.36,284.86 L110.65,278.72 L110.95,274.89 L111.25,291.14 L111.54,281.55 L111.84,284.43 L112.13,292.75 L112.43,281.96 L112.72,281.92 L113.02,277.62 L113.31,287.24 L113.61,281.27 L113.90,278.92 L114.20,280.77 L114.50,276.55 L114.79,280.11 L115.09,279.12 L115.38,274.56 L115.68,278.76 L115.97,276.31 L116.27,277.84 L116.56,284.91 L116.86,279.77 L117.15,278.29 L117.45,278.29 L117.74,274.67 L118.04,282.24 L118.34,300.27 L118.63,273.74 L118.93,275.95 L119.22,294.20 L119.52,275.70 L119.81,280.58 L120.11,292.62 L120.40,285.66 L120.70,281.40 L120.99,273.93 L121.29,289.39 L121.59,283.76 L121.88,283.72 L122.18,284.93 L122.47,291.34 L122.77,275.06 L123.06,276.17 L123.36,278.33 L123.65,280.72 L123.95,285.68 L124.24,277.24 L124.54,288.18 L124.83,284.69 L125.13,293.38 L125.43,273.16 L125.72,276.80 L126.02,290.15 L126.31,275.13 L126.61,273.28 L126.90,287.36 L127.20,286.05 L127.49,280.31 L127.79,277.92 L128.08,281.44 L128.38,281.22 L128.68,282.04 L128.97,271.84 L129.27,272.22 L129.56,278.16 L129.86,286.55 L130.15,270.46 L130.45,282.27 L130.74,284.06 L131.04,280.38 L131.33,278.43 L131.63,275.72 L131.92,278.70 L132.22,288.36 L132.52,278.23 L132.81,279.61 L133.11,271.38 L133.40,277.35 L133.70,287.56 L133.99,291.79 L134.29,272.97 L134.58,285.01 L134.88,291.49 L135.17,277.32 L135.47,280.91 L135.76,274.74 L136.06,283.62 L136.36,277.10 L136.65,276.44 L136.95,282.05 L137.24,280.42 L137.54,272.66 L137.83,272.82 L138.13,275.40 L138.42,277.11 L138.72,273.78 L139.01,281.45 L139.31,281.28 L139.61,289.47 L139.90,280.40 L140.20,280.85 L140.49,269.43 L140.79,281.96 L141.08,273.45 L141.38,273.14 L141.67,277.59 L141.97,274.44 L142.26,284.51 L142.56,279.17 L142.86,274.38 L143.15,277.33 L143.45,280.09 L143.74,274.65 L144.04,279.98 L144.33,289.22 L144.63,282.81 L144.92,284.07 L145.22,276.15 L145.51,277.48 L145.81,282.30 L146.10,276.69 L146.40,280.27 L146.70,273.43 L146.99,273.83 L147.29,275.88 L147.58,281.26 L147.88,286.03 L148.17,284.48 L148.47,276.26 L148.76,279.07 L149.06,279.63 L149.35,306.22 L149.65,275.62 L149.94,276.02 L150.24,280.07 L150.54,280.83 L150.83,278.05 L151.13,277.76 L151.42,272.27 L151.72,274.48 L152.01,272.97 L152.31,274.99 L152.60,282.23 L152.90,278.60 L153.19,276.47 L153.49,278.67 L153.79,275.51 L154.08,272.83 L154.38,279.37 L154.67,292.65 L154.97,273.56 L155.26,273.73 L155.56,274.54 L155.85,291.96 L156.15,270.35 L156.44,273.30 L156.74,276.03 L157.03,279.83 L157.33,274.64 L157.63,280.27 L157.92,273.29 L158.22,282.66 L158.51,273.01 L158.81,278.92 L159.10,278.56 L159.40,278.85 L159.69,282.14 L159.99,275.60 L160.28,275.21 L160.58,279.58 L160.88,278.28 L161.17,280.79 L161.47,274.59 L161.76,284.61 L162.06,287.97 L162.35,274.53 L162.65,276.38 L162.94,274.81 L163.24,284.33 L163.53,280.30 L163.83,273.78 L164.12,284.13 L164.42,273.16 L164.72,278.53 L165.01,285.23 L165.31,280.06 L165.60,276.46 L165.90,274.28 L166.19,279.44 L166.49,273.13 L166.78,268.47 L167.08,280.71 L167.37,290.62 L167.67,289.37 L167.97,302.01 L168.26,278.91 L168.56,275.29 L168.85,288.69 L169.15,272.78 L169.44,279.75 L169.74,285.72 L170.03,270.23 L170.33,273.66 L170.62,274.80 L170.92,276.11 L171.22,270.97 L171.51,275.92 L171.81,277.19 L172.10,291.84 L172.40,271.70 L172.69,285.65 L172.99,281.08 L173.28,274.76 L173.58,277.34 L173.87,281.13 L174.17,273.89 L174.46,274.34 L174.76,276.45 L175.06,269.36 L175.35,278.41 L175.65,272.22 L175.94,272.61 L176.24,271.63 L176.53,272.33 L176.83,277.32 L177.12,277.94 L177.42,275.62 L177.71,280.27 L178.01,281.00 L178.31,282.73 L178.60,302.76 L178.90,276.87 L179.19,279.05 L179.49,283.19 L179.78,280.29 L180.08,276.27 L180.37,281.73 L180.67,278.08 L180.96,279.00 L181.26,281.99 L181.55,275.73 L181.85,274.75 L182.15,273.40 L182.44,284.33 L182.74,282.10 L183.03,276.00 L183.33,278.01 L183.62,277.86 L183.92,285.25 L184.21,281.43 L184.51,276.20 L184.80,276.54 L185.10,271.64 L185.39,274.18 L185.69,276.31 L185.99,276.77 L186.28,296.02 L186.58,273.70 L186.87,283.13 L187.17,275.49 L187.46,272.57 L187.76,273.35 L188.05,273.44 L188.35,282.29 L188.64,278.34 L188.94,277.13 L189.24,277.81 L189.53,269.82 L189.83,279.83 L190.12,272.28 L190.42,273.91 L190.71,273.78 L191.01,273.36 L191.30,288.76 L191.60,275.29 L191.89,269.18 L192.19,275.72 L192.49,277.47 L192.78,281.35 L193.08,276.01 L193.37,289.86 L193.67,270.75 L193.96,280.37 L194.26,299.01 L194.55,269.89 L194.85,272.70 L195.14,273.78 L195.44,275.10 L195.73,278.18 L196.03,279.63 L196.33,272.77 L196.62,273.18 L196.92,272.55 L197.21,273.96 L197.51,275.00 L197.80,275.67 L198.10,272.34 L198.39,270.95 L198.69,279.77 L198.98,280.12 L199.28,271.74 L199.57,273.47 L199.87,271.83 L200.17,283.41 L200.46,278.64 L200.76,281.91 L201.05,276.23 L201.35,278.60 L201.64,271.73 L201.94,275.48 L202.23,275.39 L202.53,287.29 L202.82,277.79 L203.12,271.47 L203.42,309.22 L203.71,275.31 L204.01,273.18 L204.30,283.24 L204.60,273.32 L204.89,279.72 L205.19,271.32 L205.48,273.63 L205.78,276.22 L206.07,269.17 L206.37,269.81 L206.66,268.78 L206.96,278.57 L207.26,277.90 L207.55,273.30 L207.85,272.63 L208.14,270.31 L208.44,273.16 L208.73,283.38 L209.03,275.79 L209.32,289.64 L209.62,275.44 L209.91,278.73 L210.21,280.86 L210.51,274.95 L210.80,268.26 L211.10,282.37 L211.39,280.04 L211.69,269.86 L211.98,280.63 L212.28,269.60 L212.57,275.03 L212.87,273.30 L213.16,275.29 L213.46,269.73 L213.75,272.43 L214.05,274.59 L214.35,275.95 L214.64,286.47 L214.94,279.63 L215.23,270.60 L215.53,272.89 L215.82,272.50 L216.12,273.48 L216.41,281.50 L216.71,274.82 L217.00,284.18 L217.30,274.78 L217.60,283.24 L217.89,276.72 L218.19,274.25 L218.48,279.60 L218.78,273.20 L219.07,273.16 L219.37,273.66 L219.66,270.20 L219.96,294.35 L220.25,307.80 L220.55,273.90 L220.84,272.47 L221.14,268.45 L221.44,272.89 L221.73,272.00 L222.03,284.94 L222.32,270.55 L222.62,273.48 L222.91,281.54 L223.21,281.16 L223.50,277.80 L223.80,273.72 L224.09,279.14 L224.39,276.62 L224.69,275.66 L224.98,277.74 L225.28,275.49 L225.57,273.30 L225.87,282.82 L226.16,274.34 L226.46,271.46 L226.75,278.29 L227.05,273.81 L227.34,269.67 L227.64,294.68 L227.94,299.46 L228.23,298.06 L228.53,268.47 L228.82,278.36 L229.12,276.70 L229.41,279.39 L229.71,281.47 L230.00,284.87 L230.30,274.13 L230.59,275.28 L230.89,287.78 L231.18,284.45 L231.48,278.73 L231.78,273.82 L232.07,275.10 L232.37,271.07 L232.66,270.36 L232.96,270.96 L233.25,270.42 L233.55,284.12 L233.84,278.65 L234.14,271.29 L234.43,273.72 L234.73,276.66 L235.03,274.83 L235.32,291.70 L235.62,272.21 L235.91,273.60 L236.21,278.77 L236.50,279.52 L236.80,303.59 L237.09,273.92 L237.39,269.02 L237.68,269.45 L237.98,274.00 L238.27,277.74 L238.57,282.77 L238.87,270.74 L239.16,269.00 L239.46,281.26 L239.75,274.25 L240.05,276.08 L240.34,277.80 L240.64,285.51 L240.93,279.07 L241.23,270.74 L241.52,276.39 L241.82,282.13 L242.12,277.31 L242.41,270.32 L242.71,273.09 L243.00,276.21 L243.30,276.86 L243.59,274.55 L243.89,277.02 L244.18,272.96 L244.48,278.08 L244.77,276.40 L245.07,275.49 L245.36,269.43 L245.66,284.29 L245.96,271.22 L246.25,281.18 L246.55,285.97 L246.84,287.53 L247.14,271.84 L247.43,284.45 L247.73,279.05 L248.02,271.09 L248.32,286.44 L248.61,276.26 L248.91,276.76 L249.20,271.78 L249.50,268.92 L249.80,276.80 L250.09,271.73 L250.39,275.56 L250.68,275.06 L250.98,276.53 L251.27,270.45 L251.57,288.91 L251.86,274.43 L252.16,270.57 L252.45,274.96 L252.75,267.99 L253.05,276.11 L253.34,274.77 L253.64,279.85 L253.93,278.04 L254.23,280.94 L254.52,280.07 L254.82,274.68 L255.11,283.01 L255.41,270.76 L255.70,269.48 L256.00,278.05 L256.29,271.46 L256.59,272.58 L256.89,271.36 L257.18,266.34 L257.48,269.80 L257.77,274.13 L258.07,275.16 L258.36,277.44 L258.66,272.31 L258.95,281.26 L259.25,273.52 L259.54,275.61 L259.84,270.06 L260.14,267.96 L260.43,271.47 L260.73,270.36 L261.02,275.60 L261.32,272.77 L261.61,271.79 L261.91,276.67 L262.20,267.41 L262.50,281.47 L262.79,279.23 L263.09,268.84 L263.38,267.55 L263.68,274.37 L263.98,281.01 L264.27,265.23 L264.57,273.76 L264.86,287.32 L265.16,276.91 L265.45,267.82 L265.75,272.68 L266.04,271.31 L266.34,268.61 L266.63,270.08 L266.93,274.82 L267.23,280.86 L267.52,272.95 L267.82,284.39 L268.11,276.53 L268.41,268.76 L268.70,273.26 L269.00,274.84 L269.29,275.20 L269.59,272.17 L269.88,270.83 L270.18,279.45 L270.48,275.23 L270.77,267.06 L271.07,272.17 L271.36,282.51 L271.66,271.03 L271.95,278.21 L272.25,282.46 L272.54,269.25 L272.84,276.64 L273.13,283.40 L273.43,280.33 L273.72,276.97 L274.02,276.99 L274.32,277.77 L274.61,281.74 L274.91,268.98 L275.20,269.45 L275.50,279.85 L275.79,279.38 L276.09,270.56 L276.38,293.91 L276.68,280.39 L276.97,278.92 L277.27,275.31 L277.56,276.67 L277.86,276.74 L278.16,274.32 L278.45,288.63 L278.75,281.52 L279.04,281.16 L279.34,272.44 L279.63,301.27 L279.93,273.85 L280.22,271.87 L280.52,272.20 L280.81,272.61 L281.11,276.92 L281.41,274.98 L281.70,279.37 L282.00,285.79 L282.29,269.98 L282.59,283.42 L282.88,268.65 L283.18,272.63 L283.47,279.20 L283.77,273.83 L284.06,270.52 L284.36,285.12 L284.65,281.45 L284.95,276.83 L285.25,274.22 L285.54,273.82 L285.84,276.14 L286.13,280.40 L286.43,277.33 L286.72,267.00 L287.02,270.28 L287.31,273.59 L287.61,276.25 L287.90,272.78 L288.20,274.50 L288.50,273.87 L288.79,268.85 L289.09,270.18 L289.38,283.84 L289.68,278.63 L289.97,268.98 L290.27,274.51 L290.56,270.85 L290.86,276.74 L291.15,283.97 L291.45,272.35 L291.75,267.99 L292.04,274.00 L292.34,286.42 L292.63,277.72 L292.93,277.69 L293.22,271.97 L293.52,271.03 L293.81,267.66 L294.11,272.95 L294.40,276.27 L294.70,274.53 L294.99,274.00 L295.29,278.58 L295.59,274.55 L295.88,275.24 L296.18,284.92 L296.47,272.72 L296.77,273.15 L297.06,283.98 L297.36,272.91 L297.65,276.22 L297.95,268.41 L298.24,272.15 L298.54,274.91 L298.84,276.07 L299.13,275.21 L299.43,271.45 L299.72,279.15 L300.02,272.03 L300.31,296.44 L300.61,271.90 L300.90,271.76 L301.20,272.85 L301.49,275.86 L301.79,270.89 L302.08,281.09 L302.38,271.36 L302.68,273.47 L302.97,270.37 L303.27,270.30 L303.56,275.54 L303.86,274.15 L304.15,273.50 L304.45,286.98 L304.74,275.40 L305.04,284.10 L305.33,286.46 L305.63,271.06 L305.92,287.45 L306.22,281.16 L306.52,273.53 L306.81,269.59 L307.11,275.81 L307.40,267.83 L307.70,278.96 L307.99,278.34 L308.29,270.08 L308.58,285.69 L308.88,279.86 L309.17,268.76 L309.47,273.71 L309.77,272.51 L310.06,270.49 L310.36,271.41 L310.65,278.46 L310.95,272.72 L311.24,285.29 L311.54,273.77 L311.83,274.04 L312.13,273.61 L312.42,272.30 L312.72,264.86 L313.01,284.35 L313.31,271.52 L313.61,270.80 L313.90,270.65 L314.20,281.63 L314.49,269.85 L314.79,272.26 L315.08,275.86 L315.38,275.50 L315.67,273.40 L315.97,271.02 L316.26,270.93 L316.56,265.07 L316.86,277.48 L317.15,272.36 L317.45,272.66 L317.74,269.04 L318.04,274.48 L318.33,278.99 L318.63,286.73 L318.92,280.62 L319.22,274.10 L319.51,268.11 L319.81,271.59 L320.11,284.00 L320.40,277.55 L320.70,274.14 L320.99,274.68 L321.29,274.72 L321.58,271.72 L321.88,274.14 L322.17,280.61 L322.47,284.94 L322.76,277.18 L323.06,301.05 L323.35,276.22 L323.65,274.26 L323.95,284.07 L324.24,274.84 L324.54,278.54 L324.83,268.20 L325.13,271.93 L325.42,289.78 L325.72,273.18 L326.01,272.41 L326.31,276.44 L326.60,275.06 L326.90,273.24 L327.19,273.05 L327.49,273.33 L327.79,282.54 L328.08,273.71 L328.38,289.21 L328.67,285.40 L328.97,270.74 L329.26,274.26 L329.56,278.15 L329.85,266.61 L330.15,273.57 L330.44,279.31 L330.74,275.59 L331.04,280.64 L331.33,284.08 L331.63,273.93 L331.92,270.83 L332.22,276.85 L332.51,273.00 L332.81,265.55 L333.10,274.28 L333.40,269.75 L333.69,274.85 L333.99,278.97 L334.28,276.89 L334.58,276.86 L334.88,270.59 L335.17,278.86 L335.47,290.87 L335.76,281.08 L336.06,281.80 L336.35,276.37 L336.65,272.91 L336.94,273.81 L337.24,271.00 L337.53,272.04 L337.83,272.39 L338.13,274.86 L338.42,271.61 L338.72,296.97 L339.01,270.64 L339.31,276.96 L339.60,287.66 L339.90,269.12 L340.19,277.59 L340.49,268.66 L340.78,273.14 L341.08,275.19 L341.38,272.54 L341.67,275.50 L341.97,269.18 L342.26,269.10 L342.56,272.46 L342.85,274.88 L343.15,274.93 L343.44,268.04 L343.74,279.39 L344.03,280.38 L344.33,272.07 L344.62,272.47 L344.92,276.39 L345.22,275.27 L345.51,286.81 L345.81,270.75 L346.10,277.09 L346.40,291.82 L346.69,279.59 L346.99,282.64 L347.28,268.24 L347.58,271.99 L347.87,274.60 L348.17,268.48 L348.46,269.59 L348.76,280.92 L349.06,275.22 L349.35,268.56 L349.65,273.25 L349.94,275.61 L350.24,280.09 L350.53,269.75 L350.83,269.58 L351.12,270.25 L351.42,273.93 L351.71,274.80 L352.01,272.46 L352.31,275.26 L352.60,270.00 L352.90,278.50 L353.19,273.02 L353.49,273.38 L353.78,271.78 L354.08,269.46 L354.37,267.29 L354.67,278.72 L354.96,284.11 L355.26,273.70 L355.56,281.17 L355.85,269.42 L356.15,276.02 L356.44,273.34 L356.74,271.24 L357.03,271.16 L357.33,275.00 L357.62,269.81 L357.92,270.16 L358.21,293.37 L358.51,273.30 L358.80,273.51 L359.10,277.79 L359.40,278.50 L359.69,275.81 L359.99,273.46 L360.28,274.21 L360.58,269.63 L360.87,270.96 L361.17,277.72 L361.46,276.48 L361.76,271.88 L362.05,274.79 L362.35,274.19 L362.64,272.65 L362.94,268.32 L363.24,271.25 L363.53,269.48 L363.83,278.80 L364.12,272.21 L364.42,279.47 L364.71,273.52 L365.01,275.28 L365.30,283.76 L365.60,275.57 L365.89,261.43 L366.19,274.03 L366.49,275.21 L366.78,278.91 L367.08,260.27 L367.37,273.61 L367.67,275.65 L367.96,270.34 L368.26,274.25 L368.55,276.74 L368.85,272.04 L369.14,279.28 L369.44,274.80 L369.74,281.01 L370.03,273.16 L370.33,273.03 L370.62,280.91 L370.92,276.27 L371.21,271.55 L371.51,275.37 L371.80,265.91 L372.10,277.84 L372.39,272.82 L372.69,276.03 L372.98,275.96 L373.28,278.89 L373.58,273.25 L373.87,275.34 L374.17,268.83 L374.46,275.73 L374.76,276.74 L375.05,270.67 L375.35,273.81 L375.64,269.16 L375.94,285.96 L376.23,271.69 L376.53,271.44 L376.82,273.18 L377.12,268.20 L377.42,270.80 L377.71,274.96 L378.01,280.14 L378.30,271.28 L378.60,271.97 L378.89,271.37 L379.19,269.61 L379.48,274.48 L379.78,279.51 L380.07,277.55 L380.37,269.43 L380.67,276.99 L380.96,270.07 L381.26,273.99 L381.55,274.24 L381.85,276.82 L382.14,275.35 L382.44,269.76 L382.73,277.15 L383.03,275.97 L383.32,277.71 L383.62,271.21 L383.92,279.49 L384.21,277.37 L384.51,269.33 L384.80,269.45 L385.10,275.59 L385.39,269.06 L385.69,272.61 L385.98,271.10 L386.28,273.09 L386.57,279.34 L386.87,274.74 L387.16,273.75 L387.46,273.98 L387.76,273.88 L388.05,275.05 L388.35,271.77 L388.64,271.54 L388.94,291.35 L389.23,278.31 L389.53,276.09 L389.82,271.02 L390.12,273.13 L390.41,270.18 L390.71,271.91 L391.00,266.66 L391.30,276.06 L391.60,274.54 L391.89,275.06 L392.19,274.70 L392.48,266.65 L392.78,277.91 L393.07,283.00 L393.37,271.96 L393.66,272.36 L393.96,279.32 L394.25,270.25 L394.55,272.17 L394.85,277.05 L395.14,277.64 L395.44,280.60 L395.73,272.47 L396.03,280.96 L396.32,268.97 L396.62,269.04 L396.91,277.27 L397.21,276.24 L397.50,280.24 L397.80,279.72 L398.09,273.42 L398.39,271.58 L398.69,273.02 L398.98,270.50 L399.28,275.56 L399.57,272.41 L399.87,269.07 L400.16,285.89 L400.46,278.02 L400.75,278.14 L401.05,281.85 L401.34,281.30 L401.64,276.86 L401.94,278.64 L402.23,275.99 L402.53,273.06 L402.82,275.88 L403.12,263.94 L403.41,280.77 L403.71,279.34 L404.00,272.89 L404.30,270.49 L404.59,274.12 L404.89,270.98 L405.19,271.33 L405.48,270.37 L405.78,280.57 L406.07,269.17 L406.37,271.77 L406.66,267.35 L406.96,272.99 L407.25,274.36 L407.55,273.51 L407.84,275.28 L408.14,295.82 L408.43,276.88 L408.73,271.68 L409.03,271.41 L409.32,280.66 L409.62,272.07 L409.91,268.56 L410.21,280.03 L410.50,269.42 L410.80,278.96 L411.09,275.16 L411.39,270.67 L411.68,271.09 L411.98,276.93 L412.27,277.25 L412.57,269.27 L412.87,275.16 L413.16,270.28 L413.46,271.71 L413.75,272.12 L414.05,273.24 L414.34,276.40 L414.64,297.20 L414.93,275.11 L415.23,272.96 L415.52,275.87 L415.82,266.85 L416.12,269.34 L416.41,275.48 L416.71,290.47 L417.00,272.01 L417.30,267.57 L417.59,279.75 L417.89,272.59 L418.18,279.90 L418.48,275.77 L418.77,276.84 L419.07,299.71 L419.37,277.41 L419.66,290.87 L419.96,265.23 L420.25,269.19 L420.55,272.35 L420.84,272.31 L421.14,271.85 L421.43,271.97 L421.73,271.41 L422.02,273.05 L422.32,271.00 L422.61,278.20 L422.91,275.87 L423.21,272.35 L423.50,269.00 L423.80,269.23 L424.09,264.03 L424.39,268.69 L424.68,268.66 L424.98,266.10 L425.27,264.38 L425.57,262.44 L425.86,263.73 L426.16,266.17 L426.45,264.99 L426.75,262.02 L427.05,263.18 L427.34,261.63 L427.64,262.83 L427.93,259.62 L428.23,259.72 L428.52,259.75 L428.82,259.90 L429.11,261.52 L429.41,260.17 L429.70,257.07 L430.00,256.96" fill="none" stroke="#00ffff" stroke-width="1" shape-rendering="crispEdges"/>
<polygon points="426,247.5 434,247.5 430,258" fill="none" stroke="#00ffff" stroke-width="1"/>
<path d="M425.5,246.5 L434.5,246.5 L430,258 Z" fill="none" stroke="#00ffff" stroke-width="1"/>
<text transform="translate(430.5,243.2) scale(1.111 1)" x="0" y="0" fill="#00ffff" font-family="Liberation Mono" font-size="12" text-anchor="middle" >1</text>
<text transform="translate(431,264) scale(1.111 1)" x="0" y="0" fill="#00ffff" font-family="Liberation Mono" font-size="12" text-anchor="start" >2</text>
<polygon points="71,284.5 75.5,288.3 71,292.2" fill="#00ffff" stroke="none"/>
<polygon points="435.5,284.5 431,288.3 435.5,292.2" fill="#00ffff" stroke="none"/>
<polygon points="425.5,356 429.5,351.5 433.5,356" fill="#00ffff" stroke="none"/>
<path d="M521.50,247.95 L521.85,242.55 L522.20,258.31 L522.55,241.36 L522.89,250.29 L523.24,253.03 L523.59,253.66 L523.94,254.45 L524.29,248.13 L524.64,245.32 L524.99,246.77 L525.33,246.75 L525.68,258.32 L526.03,257.98 L526.38,241.09 L526.73,244.78 L527.08,238.24 L527.42,243.46 L527.77,255.40 L528.12,242.95 L528.47,246.28 L528.82,248.63 L529.17,253.04 L529.52,249.77 L529.86,247.67 L530.21,244.38 L530.56,244.50 L530.91,240.74 L531.26,253.32 L531.61,245.09 L531.96,246.81 L532.30,252.00 L532.65,254.23 L533.00,243.44 L533.35,246.48 L533.70,250.24 L534.05,245.47 L534.39,251.44 L534.74,247.93 L535.09,252.66 L535.44,247.75 L535.79,243.57 L536.14,250.77 L536.49,243.24 L536.83,253.15 L537.18,249.76 L537.53,256.03 L537.88,248.12 L538.23,248.46 L538.58,250.17 L538.92,250.55 L539.27,240.88 L539.62,239.81 L539.97,255.95 L540.32,241.19 L540.67,258.82 L541.02,251.79 L541.36,247.46 L541.71,247.10 L542.06,254.97 L542.41,253.00 L542.76,248.18 L543.11,252.42 L543.46,248.37 L543.80,243.49 L544.15,242.69 L544.50,248.79 L544.85,247.01 L545.20,248.32 L545.55,251.15 L545.89,251.53 L546.24,253.71 L546.59,243.79 L546.94,248.75 L547.29,248.68 L547.64,244.67 L547.99,243.51 L548.33,238.49 L548.68,249.60 L549.03,249.76 L549.38,246.81 L549.73,253.14 L550.08,238.89 L550.43,241.54 L550.77,243.01 L551.12,244.61 L551.47,242.56 L551.82,240.89 L552.17,244.48 L552.52,249.56 L552.87,258.36 L553.21,241.45 L553.56,243.45 L553.91,252.91 L554.26,240.74 L554.61,245.16 L554.96,255.63 L555.30,247.74 L555.65,249.30 L556.00,239.82 L556.35,258.45 L556.70,249.70 L557.05,248.15 L557.40,236.27 L557.74,253.57 L558.09,264.97 L558.44,255.99 L558.79,245.37 L559.14,240.85 L559.49,234.40 L559.84,243.37 L560.18,249.97 L560.53,240.98 L560.88,245.20 L561.23,246.97 L561.58,246.71 L561.93,237.91 L562.27,250.46 L562.62,253.38 L562.97,196.00 L563.32,245.60 L563.67,251.49 L564.02,252.44 L564.37,243.47 L564.71,233.48 L565.06,239.46 L565.41,239.89 L565.76,236.63 L566.11,260.00 L566.46,256.17 L566.80,250.07 L567.15,250.10 L567.50,251.73 L567.85,241.87 L568.20,253.42 L568.55,248.67 L568.90,258.88 L569.24,250.60 L569.59,232.99 L569.94,248.37 L570.29,239.87 L570.64,239.88 L570.99,244.41 L571.34,240.52 L571.68,242.14 L572.03,238.49 L572.38,249.14 L572.73,254.76 L573.08,250.51 L573.43,247.69 L573.77,240.02 L574.12,246.11 L574.47,244.39 L574.82,245.80 L575.17,233.07 L575.52,248.49 L575.87,232.35 L576.21,251.07 L576.56,248.13 L576.91,236.48 L577.26,239.90 L577.61,246.66 L577.96,242.83 L578.31,248.23 L578.65,236.94 L579.00,238.23 L579.35,247.16 L579.70,240.29 L580.05,246.31 L580.40,243.82 L580.75,240.30 L581.09,247.54 L581.44,239.12 L581.79,238.78 L582.14,239.24 L582.49,232.93 L582.84,245.00 L583.18,254.04 L583.53,244.16 L583.88,239.82 L584.23,242.38 L584.58,237.71 L584.93,201.00 L585.28,242.99 L585.62,233.97 L585.97,249.86 L586.32,233.37 L586.67,244.19 L587.02,247.80 L587.37,250.96 L587.72,245.52 L588.06,226.75 L588.41,234.71 L588.76,256.07 L589.11,242.75 L589.46,239.03 L589.81,234.42 L590.15,238.35 L590.50,243.73 L590.85,234.72 L591.20,240.16 L591.55,258.44 L591.90,244.45 L592.25,246.29 L592.59,232.72 L592.94,231.72 L593.29,247.56 L593.64,239.21 L593.99,238.81 L594.34,253.07 L594.68,257.11 L595.03,239.78 L595.38,236.95 L595.73,245.50 L596.08,261.59 L596.43,240.60 L596.78,245.52 L597.12,246.68 L597.47,242.15 L597.82,249.75 L598.17,234.98 L598.52,238.39 L598.87,242.87 L599.22,236.94 L599.56,240.04 L599.91,250.14 L600.26,238.75 L600.61,241.93 L600.96,251.11 L601.31,244.52 L601.65,234.62 L602.00,241.02 L602.35,220.91 L602.70,221.75 L603.05,241.98 L603.40,233.51 L603.75,218.88 L604.09,242.09 L604.44,246.72 L604.79,242.80 L605.14,251.34 L605.49,246.46 L605.84,236.15 L606.19,241.99 L606.53,235.89 L606.88,227.98 L607.23,236.56 L607.58,237.22 L607.93,240.63 L608.28,243.78 L608.62,246.18 L608.97,234.98 L609.32,230.21 L609.67,234.50 L610.02,227.41 L610.37,227.67 L610.72,246.36 L611.06,238.55 L611.41,239.19 L611.76,236.12 L612.11,226.69 L612.46,241.88 L612.81,240.93 L613.16,233.75 L613.50,224.47 L613.85,223.15 L614.20,245.27 L614.55,238.97 L614.90,243.09 L615.25,227.75 L615.60,232.27 L615.94,239.10 L616.29,240.47 L616.64,233.37 L616.99,223.88 L617.34,243.12 L617.69,239.69 L618.03,234.98 L618.38,235.75 L618.73,231.16 L619.08,241.63 L619.43,242.10 L619.78,256.39 L620.13,235.19 L620.47,224.56 L620.82,256.16 L621.17,242.07 L621.52,225.89 L621.87,236.76 L622.22,248.48 L622.57,222.76 L622.91,250.00 L623.26,220.62 L623.61,241.41 L623.96,239.60 L624.31,234.66 L624.66,234.31 L625.00,228.27 L625.35,229.04 L625.70,236.38 L626.05,219.88 L626.40,226.68 L626.75,231.71 L627.10,233.04 L627.44,234.34 L627.79,235.37 L628.14,227.17 L628.49,228.20 L628.84,233.81 L629.19,222.70 L629.53,236.96 L629.88,227.47 L630.23,224.48 L630.58,240.79 L630.93,236.66 L631.28,213.92 L631.63,234.10 L631.97,220.51 L632.32,245.37 L632.67,229.02 L633.02,244.89 L633.37,240.26 L633.72,235.58 L634.07,239.50 L634.41,221.63 L634.76,223.71 L635.11,217.62 L635.46,230.53 L635.81,211.49 L636.16,220.95 L636.50,229.12 L636.85,244.70 L637.20,223.81 L637.55,221.48 L637.90,224.76 L638.25,224.24 L638.60,222.29 L638.94,231.04 L639.29,222.99 L639.64,228.22 L639.99,220.30 L640.34,235.10 L640.69,237.06 L641.04,230.19 L641.38,212.87 L641.73,202.14 L642.08,232.52 L642.43,242.47 L642.78,234.55 L643.13,241.36 L643.48,236.43 L643.82,224.67 L644.17,241.87 L644.52,223.41 L644.87,221.03 L645.22,212.68 L645.57,208.90 L645.91,218.71 L646.26,193.66 L646.61,231.93 L646.96,226.22 L647.31,227.21 L647.66,224.95 L648.01,218.02 L648.35,231.96 L648.70,205.59 L649.05,215.01 L649.40,223.66 L649.75,224.55 L650.10,239.59 L650.44,258.75 L650.79,228.36 L651.14,225.33 L651.49,226.99 L651.84,239.57 L652.19,235.05 L652.54,208.23 L652.88,219.06 L653.23,218.32 L653.58,225.95 L653.93,220.23 L654.28,209.53 L654.63,217.58 L654.98,232.00 L655.32,223.51 L655.67,239.65 L656.02,232.24 L656.37,221.71 L656.72,234.27 L657.07,231.67 L657.41,210.85 L657.76,230.68 L658.11,218.97 L658.46,232.14 L658.81,241.68 L659.16,228.41 L659.51,230.16 L659.85,252.23 L660.20,242.34 L660.55,229.82 L660.90,209.17 L661.25,234.99 L661.60,228.39 L661.95,219.45 L662.29,222.41 L662.64,231.39 L662.99,202.17 L663.34,210.83 L663.69,251.31 L664.04,215.12 L664.38,220.54 L664.73,214.71 L665.08,226.04 L665.43,215.97 L665.78,201.69 L666.13,204.54 L666.48,204.02 L666.82,213.16 L667.17,215.01 L667.52,214.93 L667.87,232.01 L668.22,197.52 L668.57,223.21 L668.92,222.44 L669.26,223.02 L669.61,216.57 L669.96,250.98 L670.31,223.43 L670.66,242.06 L671.01,236.24 L671.36,247.53 L671.70,242.30 L672.05,217.27 L672.40,228.49 L672.75,227.07 L673.10,227.70 L673.45,237.15 L673.79,234.12 L674.14,239.69 L674.49,229.59 L674.84,253.19 L675.19,229.84 L675.54,210.81 L675.89,209.39 L676.23,208.28 L676.58,215.91 L676.93,236.37 L677.28,212.48 L677.63,217.64 L677.98,220.73 L678.33,237.11 L678.67,219.19 L679.02,205.72 L679.37,214.28 L679.72,222.39 L680.07,217.54 L680.42,217.10 L680.76,221.73 L681.11,211.80 L681.46,219.76 L681.81,222.49 L682.16,217.76 L682.51,233.25 L682.86,237.04 L683.20,212.85 L683.55,231.75 L683.90,212.50 L684.25,244.70 L684.60,207.61 L684.95,224.56 L685.29,200.79 L685.64,250.53 L685.99,242.14 L686.34,204.66 L686.69,216.65 L687.04,218.18 L687.39,219.42 L687.73,218.39 L688.08,215.79 L688.43,233.67 L688.78,225.22 L689.13,205.12 L689.48,217.65 L689.83,227.12 L690.17,200.00 L690.52,207.43 L690.87,225.26 L691.22,222.66 L691.57,214.02 L691.92,209.50 L692.26,202.18 L692.61,223.51 L692.96,214.75 L693.31,207.71 L693.66,241.74 L694.01,220.02 L694.36,215.29 L694.70,222.49 L695.05,232.53 L695.40,213.00 L695.75,204.06 L696.10,222.33 L696.45,224.36 L696.80,224.20 L697.14,197.92 L697.49,203.82 L697.84,219.76 L698.19,235.66 L698.54,232.46 L698.89,224.41 L699.24,223.45 L699.58,211.88 L699.93,235.89 L700.28,219.99 L700.63,212.30 L700.98,240.82 L701.33,184.52 L701.67,201.80 L702.02,212.22 L702.37,237.04 L702.72,233.97 L703.07,203.60 L703.42,207.40 L703.77,246.94 L704.11,201.71 L704.46,208.04 L704.81,210.13 L705.16,234.52 L705.51,215.64 L705.86,227.73 L706.20,211.37 L706.55,192.82 L706.90,209.45 L707.25,202.71 L707.60,221.36 L707.95,232.83 L708.30,218.58 L708.64,203.91 L708.99,196.72 L709.34,218.47 L709.69,214.22 L710.04,218.72 L710.39,241.24 L710.74,216.22 L711.08,212.66 L711.43,222.73 L711.78,220.31 L712.13,240.00 L712.48,217.08 L712.83,196.45 L713.17,216.00 L713.52,208.84 L713.87,210.25 L714.22,227.24 L714.57,212.93 L714.92,225.95 L715.27,172.72 L715.61,214.36 L715.96,232.71 L716.31,232.48 L716.66,195.72 L717.01,208.49 L717.36,209.95 L717.71,229.27 L718.05,225.65 L718.40,234.82 L718.75,201.59 L719.10,225.36 L719.45,188.17 L719.80,208.68 L720.14,216.82 L720.49,198.70 L720.84,245.00 L721.19,229.13 L721.54,223.87 L721.89,199.78 L722.24,202.79 L722.58,207.89 L722.93,242.65 L723.28,225.71 L723.63,226.69 L723.98,200.48 L724.33,223.44 L724.68,210.00 L725.02,190.31 L725.37,212.71 L725.72,207.89 L726.07,224.55 L726.42,209.27 L726.77,218.55 L727.12,219.01 L727.46,218.28 L727.81,224.76 L728.16,191.76 L728.51,227.42 L728.86,215.74 L729.21,223.54 L729.55,250.60 L729.90,204.91 L730.25,209.94 L730.60,236.51 L730.95,227.94 L731.30,242.60 L731.65,213.74 L731.99,197.07 L732.34,200.39 L732.69,237.54 L733.04,239.21 L733.39,205.88 L733.74,195.46 L734.09,219.58 L734.43,197.41 L734.78,240.23 L735.13,220.34 L735.48,214.21 L735.83,226.56 L736.18,224.02 L736.52,205.50 L736.87,227.79 L737.22,233.99 L737.57,207.56 L737.92,215.55 L738.27,234.71 L738.62,214.20 L738.96,229.19 L739.31,211.47 L739.66,219.66 L740.01,224.26 L740.36,232.23 L740.71,217.09 L741.05,220.23 L741.40,192.63 L741.75,221.40 L742.10,232.69 L742.45,189.31 L742.80,244.62 L743.15,197.52 L743.49,232.35 L743.84,200.73 L744.19,218.85 L744.54,213.41 L744.89,221.68 L745.24,222.41 L745.59,212.53 L745.93,231.06 L746.28,215.04 L746.63,231.81 L746.98,229.98 L747.33,229.82 L747.68,223.07 L748.02,201.31 L748.37,233.94 L748.72,229.43 L749.07,228.23 L749.42,218.90 L749.77,210.89 L750.12,233.19 L750.46,223.66 L750.81,230.31 L751.16,221.81 L751.51,244.15 L751.86,212.80 L752.21,208.96 L752.56,234.75 L752.90,223.88 L753.25,228.20 L753.60,206.76 L753.95,214.27 L754.30,175.48 L754.65,226.27 L755.00,234.41 L755.34,226.87 L755.69,233.40 L756.04,220.88 L756.39,217.56 L756.74,208.09 L757.09,217.30 L757.43,223.29 L757.78,202.60 L758.13,214.46 L758.48,211.82 L758.83,238.04 L759.18,236.17 L759.53,233.52 L759.87,226.24 L760.22,255.12 L760.57,206.23 L760.92,223.81 L761.27,211.66 L761.62,212.17 L761.96,202.38 L762.31,216.14 L762.66,212.33 L763.01,232.61 L763.36,222.69 L763.71,198.43 L764.06,232.58 L764.40,232.90 L764.75,218.16 L765.10,193.13 L765.45,234.95 L765.80,228.28 L766.15,221.09 L766.50,177.70 L766.84,220.57 L767.19,226.92 L767.54,213.19 L767.89,229.77 L768.24,218.87 L768.59,206.75 L768.93,225.68 L769.28,217.87 L769.63,195.67 L769.98,222.24 L770.33,230.20 L770.68,232.91 L771.03,217.53 L771.37,209.11 L771.72,222.78 L772.07,219.47 L772.42,184.42 L772.77,226.80 L773.12,240.72 L773.47,216.82 L773.81,225.25 L774.16,214.60 L774.51,205.84 L774.86,220.03 L775.21,227.13 L775.56,215.16 L775.90,218.48 L776.25,226.64 L776.60,233.82 L776.95,209.40 L777.30,228.66 L777.65,242.33 L778.00,215.50 L778.34,232.86 L778.69,233.24 L779.04,216.18 L779.39,237.07 L779.74,226.62 L780.09,239.06 L780.44,247.48 L780.78,220.37 L781.13,197.97 L781.48,239.19 L781.83,208.91 L782.18,208.18 L782.53,202.92 L782.88,240.53 L783.22,235.82 L783.57,202.24 L783.92,226.12 L784.27,227.05 L784.62,216.32 L784.97,215.86 L785.31,235.05 L785.66,228.48 L786.01,217.66 L786.36,206.95 L786.71,237.78 L787.06,208.27 L787.41,214.54 L787.75,230.58 L788.10,226.04 L788.45,213.05 L788.80,232.41 L789.15,225.91 L789.50,231.23 L789.85,237.29 L790.19,213.94 L790.54,223.16 L790.89,178.74 L791.24,230.83 L791.59,214.87 L791.94,233.75 L792.28,212.05 L792.63,236.21 L792.98,219.36 L793.33,203.98 L793.68,209.99 L794.03,219.68 L794.38,208.11 L794.72,233.30 L795.07,238.52 L795.42,245.03 L795.77,219.65 L796.12,198.65 L796.47,230.84 L796.82,220.45 L797.16,232.73 L797.51,221.34 L797.86,252.84 L798.21,215.54 L798.56,209.49 L798.91,238.63 L799.25,243.28 L799.60,232.01 L799.95,220.62 L800.30,207.36 L800.65,243.26 L801.00,244.82 L801.35,217.22 L801.69,224.66 L802.04,218.07 L802.39,230.08 L802.74,218.58 L803.09,212.65 L803.44,251.35 L803.78,234.04 L804.13,219.64 L804.48,207.94 L804.83,235.35 L805.18,252.42 L805.53,238.25 L805.88,250.47 L806.22,236.66 L806.57,214.33 L806.92,234.06 L807.27,228.43 L807.62,223.12 L807.97,216.31 L808.32,237.70 L808.66,241.12 L809.01,202.29 L809.36,224.18 L809.71,219.03 L810.06,242.13 L810.41,201.01 L810.75,205.41 L811.10,232.15 L811.45,233.94 L811.80,234.42 L812.15,214.44 L812.50,248.40 L812.85,218.93 L813.19,199.02 L813.54,227.29 L813.89,201.02 L814.24,231.43 L814.59,234.25 L814.94,218.10 L815.29,219.14 L815.63,226.57 L815.98,237.10 L816.33,248.48 L816.68,236.77 L817.03,218.64 L817.38,215.91 L817.72,220.21 L818.07,224.10 L818.42,239.53 L818.77,234.85 L819.12,234.77 L819.47,230.96 L819.82,230.02 L820.16,219.57 L820.51,214.55 L820.86,217.13 L821.21,219.53 L821.56,248.09 L821.91,239.71 L822.26,231.85 L822.60,231.49 L822.95,217.39 L823.30,256.80 L823.65,226.77 L824.00,230.65 L824.35,237.49 L824.69,244.37 L825.04,226.88 L825.39,235.83 L825.74,226.41 L826.09,185.00 L826.44,231.85 L826.79,210.73 L827.13,228.02 L827.48,243.33 L827.83,237.41 L828.18,251.07 L828.53,212.20 L828.88,207.95 L829.23,219.41 L829.57,207.24 L829.92,226.46 L830.27,214.36 L830.62,224.17 L830.97,212.46 L831.32,234.16 L831.66,235.43 L832.01,242.26 L832.36,239.91 L832.71,237.42 L833.06,214.44 L833.41,205.07 L833.76,221.78 L834.10,218.22 L834.45,229.75 L834.80,227.27 L835.15,254.05 L835.50,225.25 L835.85,259.89 L836.20,243.82 L836.54,238.63 L836.89,232.18 L837.24,240.41 L837.59,214.95 L837.94,218.05 L838.29,227.94 L838.63,252.10 L838.98,241.83 L839.33,221.34 L839.68,254.88 L840.03,223.30 L840.38,237.29 L840.73,232.79 L841.07,220.38 L841.42,235.14 L841.77,236.28 L842.12,215.00 L842.47,236.43 L842.82,203.82 L843.17,238.07 L843.51,243.23 L843.86,212.09 L844.21,184.17 L844.56,210.30 L844.91,248.34 L845.26,250.40 L845.61,232.34 L845.95,234.27 L846.30,242.93 L846.65,237.64 L847.00,203.00 L847.35,224.00 L847.70,232.17 L848.04,238.32 L848.39,252.27 L848.74,232.03 L849.09,256.95 L849.44,224.30 L849.79,226.81 L850.14,256.78 L850.48,242.03 L850.83,253.47 L851.18,225.64 L851.53,230.66 L851.88,221.37 L852.23,248.48 L852.58,227.15 L852.92,257.22 L853.27,226.38 L853.62,238.78 L853.97,234.09 L854.32,238.04 L854.67,215.23 L855.01,232.94 L855.36,228.09 L855.71,213.13 L856.06,239.17 L856.41,245.92 L856.76,239.08 L857.11,231.92 L857.45,233.02 L857.80,215.53 L858.15,238.95 L858.50,219.85 L858.85,240.84 L859.20,214.61 L859.54,238.99 L859.89,225.48 L860.24,233.15 L860.59,250.75 L860.94,223.13 L861.29,244.73 L861.64,224.94 L861.98,254.49 L862.33,257.43 L862.68,259.28 L863.03,259.19 L863.38,244.79 L863.73,239.60 L864.08,246.09 L864.42,244.57 L864.77,247.88 L865.12,228.45 L865.47,219.61 L865.82,232.22 L866.17,221.79 L866.51,214.17 L866.86,230.33 L867.21,262.10 L867.56,239.46 L867.91,244.61 L868.26,228.26 L868.61,226.75 L868.95,227.70 L869.30,256.70 L869.65,219.37 L870.00,236.97" fill="none" stroke="#ffff00" stroke-width="1" shape-rendering="crispEdges"/>
<polygon points="822.5,174.5 830.5,174.5 826.5,185" fill="none" stroke="#ffff00" stroke-width="1"/>
<path d="M822.0,173.5 L831.0,173.5 L826.5,185 Z" fill="none" stroke="#ffff00" stroke-width="1"/>
<text transform="translate(827.0,170.2) scale(1.111 1)" x="0" y="0" fill="#ffff00" font-family="Liberation Mono" font-size="12" text-anchor="middle" >1</text>
<text transform="translate(871,222) scale(1.111 1)" x="0" y="0" fill="#ffff00" font-family="Liberation Mono" font-size="12" text-anchor="start" >1</text>
<polygon points="514,342 521.5,348.5 514,355" fill="#ffff00" stroke="none"/>
<polygon points="878,342 871,348.5 878,355" fill="#ffff00" stroke="none"/>
<polygon points="820,356.5 826.5,349 833,356.5" fill="#ffff00" stroke="none"/>
<path d="M78.50,573.42 L79.37,560.62 L80.24,565.45 L81.11,582.72 L81.98,588.12 L82.86,590.79 L83.73,591.36 L84.60,591.16 L85.47,581.57 L86.34,557.81 L87.21,542.74 L88.08,543.77 L88.95,565.50 L89.83,593.54 L90.70,593.87 L91.57,588.57 L92.44,584.81 L93.31,587.25 L94.18,569.97 L95.05,562.62 L95.92,549.58 L96.80,547.10 L97.67,539.24 L98.54,538.14 L99.41,532.62 L100.28,535.19 L101.15,541.69 L102.02,545.09 L102.89,546.79 L103.77,572.77 L104.64,583.15 L105.51,594.22 L106.38,582.71 L107.25,576.24 L108.12,581.90 L108.99,580.28 L109.86,577.02 L110.74,579.33 L111.61,566.77 L112.48,564.03 L113.35,573.43 L114.22,577.77 L115.09,572.31 L115.96,573.01 L116.84,555.16 L117.71,534.50 L118.58,546.84 L119.45,576.20 L120.32,593.10 L121.19,581.59 L122.06,565.25 L122.93,557.13 L123.81,541.89 L124.68,546.66 L125.55,562.62 L126.42,595.25 L127.29,586.73 L128.16,561.90 L129.03,573.48 L129.90,590.47 L130.78,557.48 L131.65,561.16 L132.52,592.23 L133.39,575.81 L134.26,570.09 L135.13,594.48 L136.00,581.15 L136.87,575.87 L137.75,582.76 L138.62,587.05 L139.49,576.50 L140.36,568.34 L141.23,559.02 L142.10,547.08 L142.97,554.59 L143.84,559.96 L144.72,581.76 L145.59,585.57 L146.46,597.83 L147.33,596.11 L148.20,588.12 L149.07,570.00 L149.94,553.22 L150.81,557.27 L151.69,563.57 L152.56,573.44 L153.43,563.59 L154.30,574.37 L155.17,581.18 L156.04,561.51 L156.91,566.16 L157.78,595.78 L158.66,585.78 L159.53,582.82 L160.40,563.64 L161.27,574.35 L162.14,589.04 L163.01,582.52 L163.88,589.96 L164.75,583.89 L165.62,561.96 L166.50,560.80 L167.37,571.46 L168.24,588.10 L169.11,577.87 L169.98,573.45 L170.85,579.01 L171.72,571.97 L172.59,571.13 L173.47,578.06 L174.34,572.48 L175.21,553.89 L176.08,544.45 L176.95,583.25 L177.82,589.22 L178.69,600.17 L179.56,568.57 L180.44,554.67 L181.31,573.11 L182.18,582.80 L183.05,579.38 L183.92,553.69 L184.79,555.79 L185.66,586.80 L186.53,572.86 L187.41,549.77 L188.28,558.32 L189.15,575.41 L190.02,590.60 L190.89,567.25 L191.76,545.37 L192.63,552.36 L193.50,564.34 L194.38,565.87 L195.25,564.93 L196.12,564.21 L196.99,541.70 L197.86,545.36 L198.73,566.71 L199.60,586.07 L200.47,565.59 L201.35,549.30 L202.22,549.77 L203.09,559.39 L203.96,563.02 L204.83,552.47 L205.70,556.24 L206.57,561.42 L207.44,558.22 L208.32,576.73 L209.19,580.89 L210.06,565.17 L210.93,577.74 L211.80,594.10 L212.67,588.21 L213.54,553.12 L214.41,522.82 L215.29,512.95 L216.16,536.45 L217.03,567.79 L217.90,562.08 L218.77,558.18 L219.64,552.44 L220.51,547.22 L221.38,540.40 L222.26,538.39 L223.13,538.70 L224.00,554.06 L224.87,569.84 L225.74,586.00 L226.61,565.12 L227.48,556.95 L228.35,560.09 L229.23,575.34 L230.10,577.35 L230.97,575.76 L231.84,571.83 L232.71,587.62 L233.58,591.44 L234.45,590.33 L235.32,600.01 L236.20,597.17 L237.07,587.23 L237.94,575.37 L238.81,575.93 L239.68,576.41 L240.55,558.49 L241.42,565.43 L242.29,551.05 L243.17,540.34 L244.04,521.29 L244.91,545.96 L245.78,589.00 L246.65,570.72 L247.52,560.87 L248.39,568.60 L249.26,575.25 L250.14,581.99 L251.01,578.44 L251.88,575.69 L252.75,586.86 L253.62,594.21 L254.49,593.17 L255.36,573.69 L256.24,550.13 L257.11,539.43 L257.98,546.48 L258.85,555.81 L259.72,562.57 L260.59,564.75 L261.46,558.85 L262.33,556.55 L263.20,542.10 L264.08,528.41 L264.95,506.93 L265.82,463.00 L266.69,463.00 L267.56,463.00 L268.43,463.00 L269.30,480.28 L270.17,522.57 L271.05,548.93 L271.92,577.88 L272.79,571.37 L273.66,577.24 L274.53,563.19 L275.40,557.09 L276.27,537.09 L277.14,545.80 L278.02,574.60 L278.89,580.17 L279.76,554.70 L280.63,559.23 L281.50,581.72 L282.37,586.67 L283.24,572.66 L284.12,580.71 L284.99,595.84 L285.86,591.91 L286.73,590.86 L287.60,588.35 L288.47,560.66 L289.34,539.53 L290.21,550.92 L291.08,576.53 L291.96,585.47 L292.83,539.80 L293.70,517.19 L294.57,542.25 L295.44,564.29 L296.31,533.58 L297.18,531.59 L298.05,556.84 L298.93,553.41 L299.80,515.49 L300.67,514.00 L301.54,546.59 L302.41,572.47 L303.28,570.94 L304.15,570.81 L305.02,570.88 L305.90,574.08 L306.77,581.25 L307.64,598.25 L308.51,582.52 L309.38,586.34 L310.25,586.98 L311.12,595.60 L312.00,592.34 L312.87,594.43 L313.74,580.93 L314.61,561.57 L315.48,544.03 L316.35,551.08 L317.22,554.22 L318.09,568.82 L318.97,572.72 L319.84,589.31 L320.71,585.42 L321.58,580.17 L322.45,574.01 L323.32,573.41 L324.19,566.75 L325.06,566.07 L325.94,582.32 L326.81,587.84 L327.68,572.62 L328.55,577.12 L329.42,588.49 L330.29,573.30 L331.16,570.20 L332.03,578.42 L332.90,576.35 L333.78,576.40 L334.65,568.96 L335.52,575.73 L336.39,564.38 L337.26,549.88 L338.13,539.98 L339.00,542.46 L339.88,553.58 L340.75,567.24 L341.62,564.73 L342.49,545.86 L343.36,569.64 L344.23,578.35 L345.10,577.69 L345.97,569.40 L346.84,551.22 L347.72,553.94 L348.59,578.33 L349.46,581.72 L350.33,574.82 L351.20,572.55 L352.07,561.82 L352.94,551.38 L353.81,559.07 L354.69,548.14 L355.56,568.39 L356.43,591.74 L357.30,584.80 L358.17,594.69 L359.04,575.29 L359.91,545.56 L360.78,534.98 L361.66,552.43 L362.53,552.52 L363.40,555.05 L364.27,563.84 L365.14,589.62 L366.01,569.72 L366.88,539.35 L367.75,536.82 L368.63,552.41 L369.50,576.32 L370.37,573.97 L371.24,567.59 L372.11,560.89 L372.98,558.23 L373.85,560.03 L374.72,568.42 L375.60,573.23 L376.47,574.41 L377.34,562.73 L378.21,550.55 L379.08,545.40 L379.95,550.79 L380.82,577.54 L381.69,574.70 L382.57,572.14 L383.44,570.15 L384.31,585.30 L385.18,585.89 L386.05,560.42 L386.92,577.31 L387.79,572.89 L388.66,525.94 L389.54,527.13 L390.41,567.88 L391.28,582.49 L392.15,556.26 L393.02,577.66 L393.89,593.65 L394.76,564.60 L395.63,573.42 L396.51,588.03 L397.38,573.79 L398.25,585.26 L399.12,595.17 L399.99,582.54 L400.86,583.76 L401.73,590.94 L402.60,587.52 L403.48,585.06 L404.35,564.23 L405.22,541.76 L406.09,520.49 L406.96,519.83 L407.83,527.57 L408.70,540.17 L409.57,548.89 L410.45,572.22 L411.32,580.94 L412.19,585.12 L413.06,594.80 L413.93,596.42 L414.80,590.31 L415.67,577.07 L416.55,572.15 L417.42,557.09 L418.29,567.53 L419.16,575.63 L420.03,583.20 L420.90,582.84 L421.77,594.71 L422.64,593.32 L423.51,564.36 L424.39,555.61 L425.26,563.24 L426.13,546.62 L427.00,543.09" fill="none" stroke="#ffff00" stroke-width="1" shape-rendering="crispEdges"/>
<polygon points="263.5,452.5 271.5,452.5 267.5,463" fill="none" stroke="#ffff00" stroke-width="1"/>
<path d="M263.0,451.5 L272.0,451.5 L267.5,463 Z" fill="none" stroke="#ffff00" stroke-width="1"/>
<text transform="translate(268.0,448.2) scale(1.111 1)" x="0" y="0" fill="#ffff00" font-family="Liberation Mono" font-size="12" text-anchor="middle" >1</text>
<text transform="translate(428,556) scale(1.111 1)" x="0" y="0" fill="#ffff00" font-family="Liberation Mono" font-size="12" text-anchor="start" >1</text>
<polygon points="71,676.5 78.5,683 71,689.5" fill="#ffff00" stroke="none"/>
<polygon points="435.5,676.5 428,683 435.5,689.5" fill="#ffff00" stroke="none"/>
<path d="M521.50,544.00 L521.50,611.51 L521.85,610.55 L522.20,618.57 L522.55,618.20 L522.89,625.94 L523.24,608.04 L523.59,613.27 L523.94,613.32 L524.29,619.54 L524.64,605.53 L524.99,608.48 L525.33,614.95 L525.68,617.93 L526.03,616.62 L526.38,619.62 L526.73,612.07 L527.08,618.37 L527.42,608.37 L527.77,616.36 L528.12,614.15 L528.47,603.80 L528.82,617.81 L529.17,624.16 L529.52,611.52 L529.86,621.17 L530.21,612.47 L530.56,607.12 L530.91,612.48 L531.26,613.85 L531.61,625.40 L531.96,610.06 L532.30,609.89 L532.65,619.07 L533.00,600.72 L533.35,621.07 L533.70,616.98 L534.05,618.77 L534.39,611.43 L534.74,611.26 L535.09,607.82 L535.44,614.88 L535.79,618.11 L536.14,606.67 L536.49,619.62 L536.83,621.05 L537.18,603.83 L537.53,612.28 L537.88,609.62 L538.23,602.85 L538.58,610.77 L538.92,614.60 L539.27,609.01 L539.62,617.40 L539.97,608.79 L540.32,610.21 L540.67,621.45 L541.02,606.47 L541.36,619.57 L541.71,606.00 L542.06,612.79 L542.41,604.15 L542.76,617.13 L543.11,616.98 L543.46,611.41 L543.80,611.54 L544.15,606.20 L544.50,610.67 L544.85,611.50 L545.20,605.52 L545.55,596.45 L545.89,619.43 L546.24,610.73 L546.59,607.00 L546.94,612.03 L547.29,602.23 L547.64,609.88 L547.99,618.50 L548.33,606.12 L548.68,623.80 L549.03,616.11 L549.38,594.43 L549.73,610.45 L550.08,608.19 L550.43,616.60 L550.77,611.72 L551.12,611.19 L551.47,597.70 L551.82,618.76 L552.17,624.86 L552.52,609.01 L552.87,593.82 L553.21,616.03 L553.56,625.24 L553.91,617.07 L554.26,607.45 L554.61,609.24 L554.96,607.60 L555.30,626.35 L555.65,614.66 L556.00,606.13 L556.35,611.44 L556.70,616.18 L557.05,603.88 L557.40,601.28 L557.74,612.11 L558.09,615.53 L558.44,600.94 L558.79,612.58 L559.14,611.33 L559.49,596.42 L559.84,606.69 L560.18,614.75 L560.53,620.41 L560.88,611.45 L561.23,612.21 L561.58,616.35 L561.93,603.72 L562.27,611.69 L562.62,622.76 L562.97,616.58 L563.32,610.86 L563.67,620.82 L564.02,617.67 L564.37,617.13 L564.71,611.91 L565.06,615.68 L565.41,604.13 L565.76,625.70 L566.11,608.36 L566.46,607.56 L566.80,606.62 L567.15,595.10 L567.50,612.46 L567.85,605.04 L568.20,604.14 L568.55,621.16 L568.90,598.80 L569.24,603.82 L569.59,611.51 L569.94,606.20 L570.29,608.85 L570.64,615.81 L570.99,621.17 L571.34,601.85 L571.68,597.00 L572.03,615.84 L572.38,603.34 L572.73,620.92 L573.08,615.11 L573.43,615.26 L573.77,619.44 L574.12,606.51 L574.47,602.98 L574.82,606.69 L575.17,615.07 L575.52,599.43 L575.87,609.28 L576.21,595.83 L576.56,621.50 L576.91,585.10 L577.26,612.15 L577.61,617.26 L577.96,618.97 L578.31,602.50 L578.65,600.06 L579.00,603.48 L579.35,602.24 L579.70,616.99 L580.05,610.20 L580.40,623.47 L580.75,616.98 L581.09,600.34 L581.44,613.33 L581.79,585.38 L582.14,597.01 L582.49,615.48 L582.84,598.51 L583.18,603.34 L583.53,609.38 L583.88,602.16 L584.23,609.85 L584.58,532.00 L584.93,600.60 L585.28,599.00 L585.62,603.88 L585.97,603.11 L586.32,597.43 L586.67,598.77 L587.02,614.59 L587.37,610.92 L587.72,591.02 L588.06,590.18 L588.41,600.06 L588.76,605.68 L589.11,596.36 L589.46,598.09 L589.81,618.93 L590.15,601.38 L590.50,617.54 L590.85,606.58 L591.20,603.55 L591.55,581.50 L591.90,620.17 L592.25,603.81 L592.59,594.50 L592.94,596.27 L593.29,593.37 L593.64,612.66 L593.99,603.30 L594.34,606.90 L594.68,586.81 L595.03,601.12 L595.38,601.23 L595.73,599.32 L596.08,614.27 L596.43,595.89 L596.78,613.08 L597.12,597.27 L597.47,607.85 L597.82,585.52 L598.17,596.36 L598.52,576.56 L598.87,619.09 L599.22,582.74 L599.56,590.13 L599.91,594.20 L600.26,572.74 L600.61,615.06 L600.96,596.54 L601.31,580.96 L601.65,589.30 L602.00,600.48 L602.35,588.38 L602.70,603.09 L603.05,599.75 L603.40,604.06 L603.75,584.75 L604.09,589.62 L604.44,565.43 L604.79,582.45 L605.14,613.31 L605.49,587.03 L605.84,608.53 L606.19,592.03 L606.53,592.43 L606.88,609.16 L607.23,601.69 L607.58,600.90 L607.93,591.67 L608.28,595.09 L608.62,596.70 L608.97,571.86 L609.32,588.09 L609.67,586.15 L610.02,579.75 L610.37,569.07 L610.72,569.30 L611.06,605.94 L611.41,586.39 L611.76,583.65 L612.11,579.77 L612.46,575.83 L612.81,591.52 L613.16,603.61 L613.50,597.67 L613.85,605.02 L614.20,574.16 L614.55,597.19 L614.90,604.84 L615.25,580.09 L615.60,589.66 L615.94,597.50 L616.29,586.21 L616.64,599.47 L616.99,583.81 L617.34,591.61 L617.69,587.32 L618.03,595.97 L618.38,600.00 L618.73,585.63 L619.08,611.77 L619.43,569.58 L619.78,589.13 L620.13,558.43 L620.47,569.96 L620.82,584.89 L621.17,597.95 L621.52,574.80 L621.87,576.92 L622.22,574.96 L622.57,573.63 L622.91,581.48 L623.26,570.76 L623.61,597.87 L623.96,586.33 L624.31,578.59 L624.66,596.81 L625.00,586.69 L625.35,563.41 L625.70,579.18 L626.05,589.80 L626.40,568.23 L626.75,600.87 L627.10,582.51 L627.44,566.81 L627.79,598.71 L628.14,582.01 L628.49,586.93 L628.84,558.45 L629.19,606.85 L629.53,592.10 L629.88,591.06 L630.23,579.83 L630.58,575.78 L630.93,578.12 L631.28,561.99 L631.63,568.52 L631.97,605.71 L632.32,598.20 L632.67,590.45 L633.02,593.95 L633.37,592.35 L633.72,566.34 L634.07,595.49 L634.41,566.06 L634.76,558.97 L635.11,582.95 L635.46,591.50 L635.81,561.95 L636.16,598.20 L636.50,574.75 L636.85,579.85 L637.20,561.55 L637.55,572.86 L637.90,583.83 L638.25,556.50 L638.60,569.07 L638.94,573.74 L639.29,580.80 L639.64,582.73 L639.99,608.19 L640.34,581.53 L640.69,600.42 L641.04,572.81 L641.38,537.75 L641.73,571.14 L642.08,566.29 L642.43,562.16 L642.78,591.81 L643.13,570.05 L643.48,588.00 L643.82,589.29 L644.17,565.05 L644.52,591.70 L644.87,582.26 L645.22,567.10 L645.57,557.76 L645.91,577.36 L646.26,561.37 L646.61,602.05 L646.96,580.36 L647.31,572.30 L647.66,591.86 L648.01,569.16 L648.35,575.21 L648.70,573.11 L649.05,558.30 L649.40,556.85 L649.75,594.38 L650.10,586.32 L650.44,568.97 L650.79,585.70 L651.14,539.87 L651.49,560.09 L651.84,594.31 L652.19,592.30 L652.54,588.41 L652.88,571.97 L653.23,589.99 L653.58,588.08 L653.93,599.76 L654.28,560.84 L654.63,592.31 L654.98,593.93 L655.32,610.59 L655.67,570.03 L656.02,574.27 L656.37,565.03 L656.72,545.33 L657.07,574.43 L657.41,574.39 L657.76,604.66 L658.11,575.97 L658.46,571.50 L658.81,558.37 L659.16,604.98 L659.51,549.59 L659.85,555.39 L660.20,584.63 L660.55,580.54 L660.90,606.13 L661.25,569.35 L661.60,583.18 L661.95,596.78 L662.29,538.51 L662.64,547.40 L662.99,563.72 L663.34,569.07 L663.69,593.04 L664.04,576.97 L664.38,563.88 L664.73,575.62 L665.08,573.87 L665.43,571.18 L665.78,591.06 L666.13,560.93 L666.48,555.95 L666.82,579.49 L667.17,578.73 L667.52,534.88 L667.87,554.27 L668.22,613.13 L668.57,572.79 L668.92,592.75 L669.26,589.91 L669.61,585.66 L669.96,574.01 L670.31,576.58 L670.66,593.92 L671.01,591.47 L671.36,606.55 L671.70,576.02 L672.05,568.03 L672.40,558.12 L672.75,555.77 L673.10,572.01 L673.45,580.79 L673.79,532.21 L674.14,589.86 L674.49,586.72 L674.84,576.75 L675.19,564.53 L675.54,547.66 L675.89,578.43 L676.23,601.06 L676.58,557.85 L676.93,577.95 L677.28,591.02 L677.63,588.03 L677.98,565.21 L678.33,597.38 L678.67,539.34 L679.02,569.45 L679.37,570.29 L679.72,550.52 L680.07,583.99 L680.42,568.39 L680.76,571.19 L681.11,562.04 L681.46,522.12 L681.81,589.98 L682.16,571.06 L682.51,522.71 L682.86,510.00 L683.20,539.64 L683.55,569.44 L683.90,547.53 L684.25,536.85 L684.60,564.03 L684.95,586.39 L685.29,573.06 L685.64,549.98 L685.99,577.19 L686.34,589.33 L686.69,581.20 L687.04,534.26 L687.39,538.80 L687.73,582.46 L688.08,566.06 L688.43,542.38 L688.78,563.80 L689.13,567.04 L689.48,557.44 L689.83,588.48 L690.17,573.74 L690.52,553.19 L690.87,562.29 L691.22,559.04 L691.57,565.14 L691.92,589.90 L692.26,556.60 L692.61,542.96 L692.96,553.81 L693.31,553.06 L693.66,583.24 L694.01,566.67 L694.36,575.80 L694.70,576.20 L695.05,578.61 L695.40,555.89 L695.75,556.27 L696.10,551.11 L696.45,530.01 L696.80,563.97 L697.14,558.11 L697.49,563.81 L697.84,595.97 L698.19,581.05 L698.54,558.26 L698.89,575.38 L699.24,560.53 L699.58,585.54 L699.93,552.37 L700.28,572.06 L700.63,563.62 L700.98,555.03 L701.33,592.43 L701.67,544.70 L702.02,587.64 L702.37,569.91 L702.72,575.68 L703.07,538.55 L703.42,561.27 L703.77,548.60 L704.11,560.65 L704.46,566.63 L704.81,579.26 L705.16,573.32 L705.51,566.38 L705.86,557.87 L706.20,578.83 L706.55,537.30 L706.90,560.83 L707.25,575.23 L707.60,534.03 L707.95,596.15 L708.30,559.28 L708.64,576.26 L708.99,535.79 L709.34,550.13 L709.69,577.07 L710.04,547.45 L710.39,599.13 L710.74,550.80 L711.08,562.06 L711.43,583.38 L711.78,546.90 L712.13,551.88 L712.48,563.09 L712.83,560.98 L713.17,557.20 L713.52,572.64 L713.87,555.97 L714.22,588.31 L714.57,623.02 L714.92,557.82 L715.27,559.32 L715.61,578.11 L715.96,580.74 L716.31,540.64 L716.66,575.42 L717.01,576.35 L717.36,584.28 L717.71,550.75 L718.05,605.36 L718.40,570.21 L718.75,578.77 L719.10,566.46 L719.45,546.22 L719.80,575.56 L720.14,571.72 L720.49,593.11 L720.84,573.52 L721.19,582.53 L721.54,561.53 L721.89,550.58 L722.24,574.78 L722.58,562.05 L722.93,582.84 L723.28,587.02 L723.63,611.79 L723.98,567.82 L724.33,566.42 L724.68,551.21 L725.02,576.58 L725.37,544.89 L725.72,570.25 L726.07,529.32 L726.42,559.21 L726.77,572.71 L727.12,573.24 L727.46,567.33 L727.81,558.25 L728.16,528.99 L728.51,563.12 L728.86,552.61 L729.21,548.79 L729.55,557.90 L729.90,526.79 L730.25,571.91 L730.60,560.72 L730.95,588.79 L731.30,569.34 L731.65,600.90 L731.99,551.81 L732.34,578.19 L732.69,541.82 L733.04,556.94 L733.39,586.15 L733.74,523.24 L734.09,579.89 L734.43,580.70 L734.78,568.77 L735.13,544.08 L735.48,583.34 L735.83,548.21 L736.18,559.82 L736.52,566.29 L736.87,585.44 L737.22,546.41 L737.57,570.56 L737.92,586.37 L738.27,560.46 L738.62,581.96 L738.96,569.73 L739.31,581.96 L739.66,570.44 L740.01,574.66 L740.36,573.33 L740.71,568.19 L741.05,578.04 L741.40,545.50 L741.75,554.75 L742.10,555.88 L742.45,538.65 L742.80,574.56 L743.15,556.02 L743.49,575.19 L743.84,580.67 L744.19,540.70 L744.54,582.32 L744.89,512.58 L745.24,514.18 L745.59,586.61 L745.93,546.82 L746.28,570.39 L746.63,555.34 L746.98,561.95 L747.33,611.11 L747.68,564.26 L748.02,536.76 L748.37,550.95 L748.72,528.00 L749.07,575.85 L749.42,527.20 L749.77,566.28 L750.12,588.32 L750.46,554.24 L750.81,529.97 L751.16,561.21 L751.51,559.87 L751.86,563.21 L752.21,604.56 L752.56,520.85 L752.90,520.68 L753.25,535.58 L753.60,556.99 L753.95,562.70 L754.30,570.52 L754.65,533.64 L755.00,548.54 L755.34,575.47 L755.69,573.46 L756.04,558.43 L756.39,572.17 L756.74,548.79 L757.09,522.83 L757.43,523.63 L757.78,547.84 L758.13,581.53 L758.48,545.83 L758.83,583.59 L759.18,565.73 L759.53,575.91 L759.87,568.36 L760.22,558.55 L760.57,543.75 L760.92,559.06 L761.27,593.37 L761.62,552.33 L761.96,549.18 L762.31,547.94 L762.66,575.71 L763.01,567.70 L763.36,565.21 L763.71,547.81 L764.06,596.47 L764.40,570.67 L764.75,537.94 L765.10,564.22 L765.45,536.75 L765.80,546.83 L766.15,599.22 L766.50,577.72 L766.84,524.02 L767.19,595.28 L767.54,574.79 L767.89,561.74 L768.24,559.00 L768.59,530.98 L768.93,577.11 L769.28,561.35 L769.63,550.00 L769.98,569.87 L770.33,580.28 L770.68,573.78 L771.03,584.24 L771.37,564.86 L771.72,541.60 L772.07,561.94 L772.42,551.83 L772.77,599.73 L773.12,599.11 L773.47,535.93 L773.81,563.52 L774.16,554.29 L774.51,592.51 L774.86,572.32 L775.21,541.32 L775.56,565.88 L775.90,503.00 L776.25,563.99 L776.60,535.55 L776.95,571.82 L777.30,605.36 L777.65,580.75 L778.00,553.73 L778.34,559.94 L778.69,568.77 L779.04,541.33 L779.39,576.42 L779.74,575.34 L780.09,547.66 L780.44,570.11 L780.78,556.88 L781.13,590.84 L781.48,590.16 L781.83,576.71 L782.18,518.14 L782.53,546.03 L782.88,569.96 L783.22,572.90 L783.57,560.54 L783.92,559.71 L784.27,550.39 L784.62,522.22 L784.97,570.30 L785.31,508.67 L785.66,596.48 L786.01,548.70 L786.36,574.08 L786.71,553.22 L787.06,587.74 L787.41,579.72 L787.75,563.65 L788.10,584.53 L788.45,497.19 L788.80,532.36 L789.15,534.03 L789.50,557.00 L789.85,555.11 L790.19,567.33 L790.54,553.56 L790.89,569.46 L791.24,581.98 L791.59,566.48 L791.94,534.42 L792.28,557.43 L792.63,531.70 L792.98,544.90 L793.33,516.73 L793.68,560.27 L794.03,561.31 L794.38,572.86 L794.72,539.62 L795.07,573.41 L795.42,552.31 L795.77,593.83 L796.12,571.63 L796.47,535.63 L796.82,554.84 L797.16,536.61 L797.51,569.25 L797.86,567.15 L798.21,594.71 L798.56,565.13 L798.91,546.24 L799.25,567.71 L799.60,563.46 L799.95,583.14 L800.30,580.91 L800.65,564.89 L801.00,548.10 L801.35,570.14 L801.69,551.40 L802.04,536.52 L802.39,574.43 L802.74,583.69 L803.09,601.56 L803.44,560.82 L803.78,575.56 L804.13,563.90 L804.48,566.23 L804.83,566.10 L805.18,557.95 L805.53,571.66 L805.88,510.00 L806.22,580.25 L806.57,575.74 L806.92,571.71 L807.27,557.37 L807.62,586.34 L807.97,540.92 L808.32,598.84 L808.66,567.74 L809.01,556.56 L809.36,593.87 L809.71,550.09 L810.06,545.75 L810.41,557.97 L810.75,567.28 L811.10,561.28 L811.45,564.94 L811.80,546.52 L812.15,570.13 L812.50,575.63 L812.85,542.88 L813.19,553.65 L813.54,540.70 L813.89,586.24 L814.24,537.25 L814.59,569.62 L814.94,577.91 L815.29,550.48 L815.63,559.13 L815.98,575.43 L816.33,570.35 L816.68,552.06 L817.03,591.37 L817.38,549.66 L817.72,570.44 L818.07,556.15 L818.42,606.82 L818.77,533.72 L819.12,577.56 L819.47,575.08 L819.82,570.49 L820.16,551.42 L820.51,566.68 L820.86,534.02 L821.21,557.84 L821.56,528.16 L821.91,560.62 L822.26,562.52 L822.60,596.08 L822.95,580.41 L823.30,560.47 L823.65,586.00 L824.00,520.66 L824.35,562.41 L824.69,573.34 L825.04,565.47 L825.39,531.48 L825.74,544.75 L826.09,601.15 L826.44,573.48 L826.79,547.92 L827.13,581.54 L827.48,559.68 L827.83,607.67 L828.18,575.35 L828.53,542.71 L828.88,540.31 L829.23,570.94 L829.57,548.18 L829.92,592.38 L830.27,570.47 L830.62,560.88 L830.97,595.48 L831.32,540.79 L831.66,561.18 L832.01,585.07 L832.36,553.18 L832.71,581.55 L833.06,579.45 L833.41,588.61 L833.76,571.55 L834.10,606.62 L834.45,562.83 L834.80,528.90 L835.15,574.89 L835.50,600.51 L835.85,576.48 L836.20,567.18 L836.54,563.30 L836.89,562.49 L837.24,532.51 L837.59,565.65 L837.94,574.62 L838.29,558.41 L838.63,553.21 L838.98,566.17 L839.33,567.73 L839.68,578.36 L840.03,552.73 L840.38,592.60 L840.73,563.64 L841.07,548.33 L841.42,567.80 L841.77,599.52 L842.12,570.61 L842.47,550.90 L842.82,558.57 L843.17,587.80 L843.51,518.87 L843.86,548.59 L844.21,558.87 L844.56,508.03 L844.91,573.30 L845.26,595.81 L845.61,570.93 L845.95,561.87 L846.30,594.63 L846.65,553.92 L847.00,546.56 L847.35,594.10 L847.70,580.16 L848.04,575.26 L848.39,591.93 L848.74,557.58 L849.09,565.99 L849.44,553.62 L849.79,561.82 L850.14,575.28 L850.48,572.60 L850.83,568.50 L851.18,571.21 L851.53,567.39 L851.88,557.07 L852.23,580.89 L852.58,573.48 L852.92,577.26 L853.27,578.91 L853.62,552.21 L853.97,568.40 L854.32,570.63 L854.67,587.07 L855.01,552.54 L855.36,544.86 L855.71,555.08 L856.06,527.78 L856.41,606.31 L856.76,578.73 L857.11,554.65 L857.45,596.77 L857.80,566.75 L858.15,555.62 L858.50,573.09 L858.85,568.90 L859.20,547.52 L859.54,545.98 L859.89,594.30 L860.24,590.87 L860.59,559.16 L860.94,579.23 L861.29,528.03 L861.64,558.20 L861.98,563.42 L862.33,571.88 L862.68,574.72 L863.03,582.40 L863.38,531.72 L863.73,560.90 L864.08,603.66 L864.42,580.47 L864.77,555.30 L865.12,554.65 L865.47,530.67 L865.82,563.02 L866.17,548.46 L866.51,571.90 L866.86,559.65 L867.21,557.47 L867.56,579.07 L867.91,564.62 L868.26,551.17 L868.61,564.22 L868.95,566.30 L869.30,551.03 L869.65,582.73 L870.00,554.64" fill="none" stroke="#ffff00" stroke-width="1" shape-rendering="crispEdges"/>
<polygon points="772,492.5 780,492.5 776,503" fill="none" stroke="#ffff00" stroke-width="1"/>
<path d="M771.5,491.5 L780.5,491.5 L776,503 Z" fill="none" stroke="#ffff00" stroke-width="1"/>
<text transform="translate(776.5,488.2) scale(1.111 1)" x="0" y="0" fill="#ffff00" font-family="Liberation Mono" font-size="12" text-anchor="middle" >1</text>
<text transform="translate(871,562) scale(1.111 1)" x="0" y="0" fill="#ffff00" font-family="Liberation Mono" font-size="12" text-anchor="start" >1</text>
<polygon points="514,676.5 521.5,683 514,689.5" fill="#ffff00" stroke="none"/>
<polygon points="878,676.5 871,683 878,689.5" fill="#ffff00" stroke="none"/>
<polygon points="769.5,691.5 776,684 782.5,691.5" fill="#ffff00" stroke="none"/>
<polygon points="261,691.5 267.5,684 274,691.5" fill="#ffff00" stroke="none"/>
<rect x="884" y="46" width="140" height="669" fill="#000000" />
<rect x="886" y="46" width="138" height="34" fill="#000030" />
<rect x="886" y="46" width="136" height="33" fill="#7878b8" />
<rect x="887" y="47" width="135" height="32" fill="#333366" />
<text x="955" y="68" fill="#ffffff" font-family="'Liberation Sans', sans-serif" font-size="12.5" text-anchor="middle" font-weight="normal" >Trigger</text>
<rect x="886" y="81" width="138" height="23" fill="#000000" />
<rect x="886" y="81" width="137" height="23" fill="#5a5a5a" />
<rect x="886" y="81" width="136" height="22" fill="#9a9a9a" />
<rect x="887" y="82" width="135" height="21" fill="#808080" />
<polygon points="946,97 955,89 964,97" fill="#a8a8a8" stroke="none"/>
<rect x="886" y="105" width="5" height="541" fill="#f6f4ec" />
<rect x="886" y="105" width="1" height="373" fill="#fffff4" />
<rect x="887" y="105" width="1" height="373" fill="#f4f2e6" />
<rect x="888" y="105" width="1" height="373" fill="#e6e2d0" />
<rect x="889" y="105" width="1" height="373" fill="#a8a698" />
<rect x="890" y="105" width="1" height="373" fill="#707068" />
<rect x="886" y="477" width="4" height="1" fill="#a8a698" />
<rect x="886" y="120" width="4" height="1" fill="#a8a698" />
<rect x="888" y="114" width="1" height="1" fill="#000000" />
<rect x="886" y="628" width="1" height="17" fill="#fffff4" />
<rect x="887" y="628" width="1" height="17" fill="#f4f2e6" />
<rect x="888" y="628" width="1" height="17" fill="#e6e2d0" />
<rect x="889" y="628" width="1" height="17" fill="#a8a698" />
<rect x="890" y="628" width="1" height="17" fill="#707068" />
<rect x="886" y="644" width="4" height="1" fill="#a8a698" />
<rect x="888" y="636" width="1" height="1" fill="#000000" />
<rect x="891" y="105" width="133" height="44" fill="#000000" />
<rect x="891" y="105" width="132" height="43" fill="#707070" />
<rect x="891" y="105" width="131" height="42" fill="#e8e8e8" />
<rect x="892" y="106" width="130" height="41" fill="#b4b4b4" />
<text x="957.5" y="131.5" fill="#2a0a28" font-family="'Liberation Sans', sans-serif" font-size="12.5" text-anchor="middle" font-weight="normal" >Hold</text>
<circle cx="899.5" cy="126.5" r="3.5" fill="#ffffff" shape-rendering="auto"/>
<circle cx="899" cy="126.0" r="3.5" fill="#404040" shape-rendering="auto"/>
<rect x="891" y="150" width="133" height="44" fill="#000000" />
<rect x="891" y="150" width="132" height="43" fill="#3a3a3a" />
<rect x="891" y="150" width="131" height="42" fill="#5e5e5e" />
<rect x="892" y="151" width="130" height="41" fill="#4a4a4a" />
<text x="957.5" y="176.5" fill="#ffffff" font-family="'Liberation Sans', sans-serif" font-size="12.5" text-anchor="middle" font-weight="normal" >Single</text>
<rect x="891" y="195" width="133" height="43" fill="#000000" />
<rect x="891" y="195" width="132" height="42" fill="#707070" />
<rect x="891" y="195" width="131" height="41" fill="#e8e8e8" />
<rect x="892" y="196" width="130" height="40" fill="#b4b4b4" />
<text x="957.5" y="221.0" fill="#2a0a28" font-family="'Liberation Sans', sans-serif" font-size="12.5" text-anchor="middle" font-weight="normal" >Continuous</text>
<rect x="891" y="238" width="133" height="4" fill="#000000" />
<rect x="891" y="238" width="133" height="3" fill="#1a1a50" />
<rect x="891" y="239" width="133" height="1" fill="#40408a" />
<rect x="891" y="242" width="133" height="43" fill="#000000" />
<rect x="891" y="242" width="132" height="42" fill="#707070" />
<rect x="891" y="242" width="131" height="41" fill="#e8e8e8" />
<rect x="892" y="243" width="130" height="40" fill="#b4b4b4" />
<text x="957.5" y="258" fill="#2a0a28" font-family="'Liberation Sans', sans-serif" font-size="12.5" text-anchor="middle" font-weight="normal" >Hold</text>
<text x="957.5" y="276" fill="#2a0a28" font-family="'Liberation Sans', sans-serif" font-size="12.5" text-anchor="middle" font-weight="normal" >All Channels</text>
<rect x="891" y="286" width="133" height="41" fill="#000000" />
<rect x="891" y="286" width="132" height="40" fill="#707070" />
<rect x="891" y="286" width="131" height="39" fill="#e8e8e8" />
<rect x="892" y="287" width="130" height="38" fill="#b4b4b4" />
<text x="957.5" y="303" fill="#2a0a28" font-family="'Liberation Sans', sans-serif" font-size="12.5" text-anchor="middle" font-weight="normal" >Continuous</text>
<text x="957.5" y="321" fill="#2a0a28" font-family="'Liberation Sans', sans-serif" font-size="12.5" text-anchor="middle" font-weight="normal" >Disp Channels</text>
<rect x="891" y="327" width="133" height="4" fill="#000000" />
<rect x="891" y="327" width="133" height="3" fill="#1a1a50" />
<rect x="891" y="328" width="133" height="1" fill="#40408a" />
<rect x="891" y="331" width="133" height="43" fill="#000000" />
<rect x="891" y="331" width="132" height="42" fill="#707070" />
<rect x="891" y="331" width="131" height="41" fill="#e8e8e8" />
<rect x="892" y="332" width="130" height="40" fill="#b4b4b4" />
<text x="957.5" y="347" fill="#2a0a28" font-family="'Liberation Sans', sans-serif" font-size="12.5" text-anchor="middle" font-weight="normal" >Trigger Source</text>
<rect x="905" y="351" width="105" height="18" fill="#e8e8e8" />
<rect x="905" y="351" width="104" height="17" fill="#808080" />
<rect x="906" y="352" width="103" height="16" fill="#d0d0d0" />
<text x="957.5" y="365" fill="#2a0a28" font-family="'Liberation Sans', sans-serif" font-size="12.5" text-anchor="middle" font-weight="normal" >Internal</text>
<polygon points="1013.5,346 1019.5,351 1013.5,356" fill="#d8d8d8" stroke="none"/>
<rect x="891" y="375" width="133" height="44" fill="#000000" />
<rect x="891" y="375" width="132" height="43" fill="#707070" />
<rect x="891" y="375" width="131" height="42" fill="#e8e8e8" />
<rect x="892" y="376" width="130" height="41" fill="#b4b4b4" />
<text x="957.5" y="391" fill="#2a0a28" font-family="'Liberation Sans', sans-serif" font-size="12.5" text-anchor="middle" font-weight="normal" >Trigger Event</text>
<rect x="905" y="395" width="105" height="18" fill="#e8e8e8" />
<rect x="905" y="395" width="104" height="17" fill="#808080" />
<rect x="906" y="396" width="103" height="16" fill="#d0d0d0" />
<text x="957.5" y="409" fill="#2a0a28" font-family="'Liberation Sans', sans-serif" font-size="12.5" text-anchor="middle" font-weight="normal" >On Sweep</text>
<rect x="891" y="420" width="133" height="43" fill="#000000" />
<rect x="891" y="420" width="132" height="42" fill="#707070" />
<rect x="891" y="420" width="131" height="41" fill="#e8e8e8" />
<rect x="892" y="421" width="130" height="40" fill="#b4b4b4" />
<text x="957.5" y="436" fill="#2a0a28" font-family="'Liberation Sans', sans-serif" font-size="12.5" text-anchor="middle" font-weight="normal" >Trigger Scope</text>
<rect x="905" y="440" width="105" height="18" fill="#e8e8e8" />
<rect x="905" y="440" width="104" height="17" fill="#808080" />
<rect x="906" y="441" width="103" height="16" fill="#d0d0d0" />
<text x="957.5" y="454" fill="#2a0a28" font-family="'Liberation Sans', sans-serif" font-size="12.5" text-anchor="middle" font-weight="normal" >All Channel</text>
<rect x="891" y="463" width="133" height="4" fill="#000000" />
<rect x="891" y="463" width="133" height="3" fill="#1a1a50" />
<rect x="891" y="464" width="133" height="1" fill="#40408a" />
<rect x="891" y="467" width="133" height="41" fill="#000000" />
<rect x="891" y="467" width="132" height="40" fill="#707070" />
<rect x="891" y="467" width="131" height="39" fill="#e8e8e8" />
<rect x="892" y="468" width="130" height="38" fill="#b4b4b4" />
<text x="957.5" y="492.0" fill="#2a0a28" font-family="'Liberation Sans', sans-serif" font-size="12.5" text-anchor="middle" font-weight="normal" >Restart</text>
<rect x="891" y="510" width="133" height="43" fill="#000000" />
<rect x="891" y="510" width="132" height="42" fill="#707070" />
<rect x="891" y="510" width="131" height="41" fill="#e8e8e8" />
<rect x="892" y="511" width="130" height="40" fill="#b4b4b4" />
<text x="957.5" y="536.0" fill="#8a8a8a" font-family="'Liberation Sans', sans-serif" font-size="12.5" text-anchor="middle" font-weight="normal" >Trigger</text>
<rect x="891" y="553" width="133" height="4" fill="#000000" />
<rect x="891" y="553" width="133" height="3" fill="#1a1a50" />
<rect x="891" y="554" width="133" height="1" fill="#40408a" />
<rect x="891" y="557" width="133" height="43" fill="#000000" />
<rect x="891" y="557" width="132" height="42" fill="#707070" />
<rect x="891" y="557" width="131" height="41" fill="#e8e8e8" />
<rect x="892" y="558" width="130" height="40" fill="#b4b4b4" />
<text x="957.5" y="573" fill="#2a0a28" font-family="'Liberation Sans', sans-serif" font-size="12.5" text-anchor="middle" font-weight="normal" >Ext Trig Input</text>
<rect x="905" y="577" width="105" height="18" fill="#e8e8e8" />
<rect x="905" y="577" width="104" height="17" fill="#808080" />
<rect x="906" y="578" width="103" height="16" fill="#d0d0d0" />
<text x="957.5" y="591" fill="#2a0a28" font-family="'Liberation Sans', sans-serif" font-size="12.5" text-anchor="middle" font-weight="normal" >Negative Edge</text>
<rect x="891" y="601" width="133" height="44" fill="#000000" />
<rect x="891" y="601" width="132" height="43" fill="#707070" />
<rect x="891" y="601" width="131" height="42" fill="#e8e8e8" />
<rect x="892" y="602" width="130" height="41" fill="#b4b4b4" />
<text x="957.5" y="617" fill="#2a0a28" font-family="'Liberation Sans', sans-serif" font-size="12.5" text-anchor="middle" font-weight="normal" >Trigger Delay</text>
<rect x="905" y="621" width="105" height="18" fill="#e8e8e8" />
<rect x="905" y="621" width="104" height="17" fill="#808080" />
<rect x="906" y="622" width="103" height="16" fill="#d0d0d0" />
<text x="957.5" y="635" fill="#2a0a28" font-family="'Liberation Sans', sans-serif" font-size="12.5" text-anchor="middle" font-weight="normal" >0.0000 s</text>
<rect x="886" y="646" width="138" height="22" fill="#000000" />
<rect x="886" y="646" width="137" height="22" fill="#5a5a5a" />
<rect x="886" y="646" width="136" height="21" fill="#9a9a9a" />
<rect x="887" y="647" width="135" height="20" fill="#808080" />
<polygon points="946,652 955,659 964,652" fill="#a8a8a8" stroke="none"/>
<rect x="886" y="669" width="137" height="45" fill="#6a6a6a" />
<rect x="886" y="669" width="136" height="44" fill="#2a2a2a" />
<rect x="887" y="670" width="135" height="43" fill="#4a4a4a" />
<rect x="0" y="714" width="1024" height="24" fill="#000000" />
<rect x="0" y="714" width="1024" height="2" fill="#5e5e5e" />
<rect x="0" y="716" width="1024" height="19" fill="#4a4a4a" />
<rect x="704" y="717" width="48" height="18" fill="#707070" />
<rect x="704" y="717" width="47" height="17" fill="#2a2a2a" />
<rect x="705" y="718" width="46" height="16" fill="#43438a" />
<text x="728.0" y="732" fill="#ffffff" font-family="'Liberation Sans', sans-serif" font-size="16.5" text-anchor="middle" font-weight="normal" >Hold</text>
<rect x="753" y="717" width="40" height="18" fill="#707070" />
<rect x="753" y="717" width="39" height="17" fill="#2a2a2a" />
<rect x="754" y="718" width="38" height="16" fill="#4a4a4a" />
<text x="773.0" y="732" fill="#7e7e78" font-family="'Liberation Sans', sans-serif" font-size="16.5" text-anchor="middle" font-weight="normal" >Stop</text>
<rect x="794" y="717" width="53" height="18" fill="#707070" />
<rect x="794" y="717" width="52" height="17" fill="#2a2a2a" />
<rect x="795" y="718" width="51" height="16" fill="#4a4a4a" />
<text x="820.5" y="732" fill="#7e7e78" font-family="'Liberation Sans', sans-serif" font-size="16.5" text-anchor="middle" font-weight="normal" >ExtRef</text>
<rect x="848" y="717" width="32" height="18" fill="#707070" />
<rect x="848" y="717" width="31" height="17" fill="#2a2a2a" />
<rect x="849" y="718" width="30" height="16" fill="#4a4a4a" />
<text x="864.0" y="732" fill="#7e7e78" font-family="'Liberation Sans', sans-serif" font-size="16.5" text-anchor="middle" font-weight="normal" >Svc</text>
<rect x="881" y="717" width="139" height="18" fill="#707070" />
<rect x="881" y="717" width="138" height="17" fill="#2a2a2a" />
<rect x="882" y="718" width="137" height="16" fill="#4a4a4a" />
<text x="950.5" y="732" fill="#ffffff" font-family="'Liberation Sans', sans-serif" font-size="16.5" text-anchor="middle" font-weight="normal" ></text>
<text x="950.5" y="732" fill="#ffffff" font-family="'Liberation Sans', sans-serif" font-size="16.5" text-anchor="middle" font-weight="normal" >2014-10-05 10:48</text></svg>
</body></html>
